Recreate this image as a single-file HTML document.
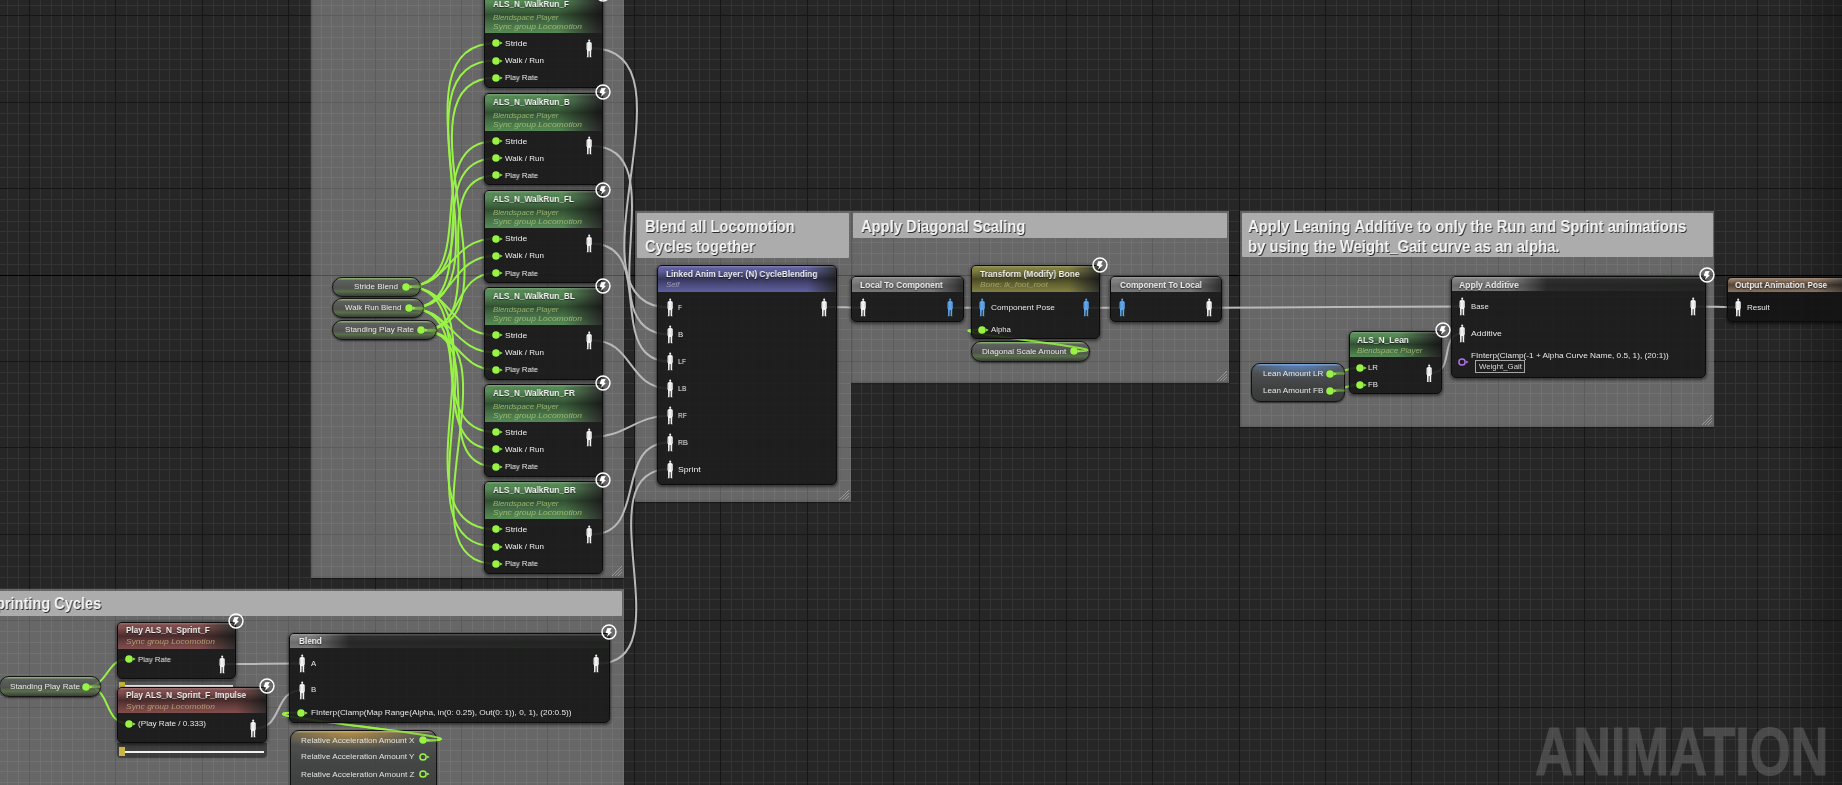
<!DOCTYPE html><html><head><meta charset="utf-8"><style>
*{margin:0;padding:0}
html,body{width:1842px;height:785px;overflow:hidden;background:#262626}
body{position:relative;font-family:"Liberation Sans",sans-serif}
.abs{position:absolute}
.t{position:absolute;white-space:nowrap;line-height:1.15;transform-origin:0 0;z-index:4;-webkit-font-smoothing:antialiased;will-change:transform}
.cm{position:absolute;background:rgba(255,255,255,0.3);box-shadow:inset 1px -1px 2px rgba(0,0,0,0.18),0 1px 1px rgba(0,0,0,0.35);z-index:1}
.ch{position:absolute;background:#acacac;border-radius:1px;z-index:1}
.nd{position:absolute;background:rgba(18,19,17,0.86);border:1px solid #0c0c0c;box-sizing:border-box;border-radius:5px;overflow:hidden;box-shadow:0 1px 3px 1px rgba(0,0,0,0.5);z-index:3}
.hd{position:absolute;left:0;top:0;right:0}
.vn{position:absolute;border-radius:10px;border:1px solid #161616;box-sizing:border-box;background:linear-gradient(180deg,rgba(160,220,120,0.75) 0,rgba(160,220,120,0) 2.5px),linear-gradient(180deg,rgba(98,100,98,0.8) 0%,rgba(72,76,70,0.78) 55%,rgba(86,112,70,0.85) 75%,rgba(52,56,50,0.9) 100%);box-shadow:0 1px 2px rgba(0,0,0,0.6);z-index:3}
.sn{position:absolute;border-radius:9px;border:1px solid #111;box-sizing:border-box;box-shadow:0 1px 2px rgba(0,0,0,0.6);z-index:3}
svg.abs{z-index:4}
</style></head><body><svg width="1842" height="785" style="position:absolute;left:0;top:0;z-index:0"><rect width="1842" height="785" fill="#262626"/><rect x="7" y="0" width="1" height="785" fill="#343434"/><rect x="18" y="0" width="1" height="785" fill="#343434"/><rect x="40" y="0" width="1" height="785" fill="#343434"/><rect x="51" y="0" width="1" height="785" fill="#343434"/><rect x="61" y="0" width="1" height="785" fill="#343434"/><rect x="72" y="0" width="1" height="785" fill="#343434"/><rect x="83" y="0" width="1" height="785" fill="#343434"/><rect x="94" y="0" width="1" height="785" fill="#343434"/><rect x="105" y="0" width="1" height="785" fill="#343434"/><rect x="126" y="0" width="1" height="785" fill="#343434"/><rect x="137" y="0" width="1" height="785" fill="#343434"/><rect x="148" y="0" width="1" height="785" fill="#343434"/><rect x="159" y="0" width="1" height="785" fill="#343434"/><rect x="169" y="0" width="1" height="785" fill="#343434"/><rect x="180" y="0" width="1" height="785" fill="#343434"/><rect x="191" y="0" width="1" height="785" fill="#343434"/><rect x="213" y="0" width="1" height="785" fill="#343434"/><rect x="223" y="0" width="1" height="785" fill="#343434"/><rect x="234" y="0" width="1" height="785" fill="#343434"/><rect x="245" y="0" width="1" height="785" fill="#343434"/><rect x="256" y="0" width="1" height="785" fill="#343434"/><rect x="267" y="0" width="1" height="785" fill="#343434"/><rect x="277" y="0" width="1" height="785" fill="#343434"/><rect x="299" y="0" width="1" height="785" fill="#343434"/><rect x="310" y="0" width="1" height="785" fill="#343434"/><rect x="321" y="0" width="1" height="785" fill="#343434"/><rect x="331" y="0" width="1" height="785" fill="#343434"/><rect x="342" y="0" width="1" height="785" fill="#343434"/><rect x="353" y="0" width="1" height="785" fill="#343434"/><rect x="364" y="0" width="1" height="785" fill="#343434"/><rect x="385" y="0" width="1" height="785" fill="#343434"/><rect x="396" y="0" width="1" height="785" fill="#343434"/><rect x="407" y="0" width="1" height="785" fill="#343434"/><rect x="418" y="0" width="1" height="785" fill="#343434"/><rect x="429" y="0" width="1" height="785" fill="#343434"/><rect x="439" y="0" width="1" height="785" fill="#343434"/><rect x="450" y="0" width="1" height="785" fill="#343434"/><rect x="472" y="0" width="1" height="785" fill="#343434"/><rect x="483" y="0" width="1" height="785" fill="#343434"/><rect x="493" y="0" width="1" height="785" fill="#343434"/><rect x="504" y="0" width="1" height="785" fill="#343434"/><rect x="515" y="0" width="1" height="785" fill="#343434"/><rect x="526" y="0" width="1" height="785" fill="#343434"/><rect x="537" y="0" width="1" height="785" fill="#343434"/><rect x="558" y="0" width="1" height="785" fill="#343434"/><rect x="569" y="0" width="1" height="785" fill="#343434"/><rect x="580" y="0" width="1" height="785" fill="#343434"/><rect x="591" y="0" width="1" height="785" fill="#343434"/><rect x="601" y="0" width="1" height="785" fill="#343434"/><rect x="612" y="0" width="1" height="785" fill="#343434"/><rect x="623" y="0" width="1" height="785" fill="#343434"/><rect x="645" y="0" width="1" height="785" fill="#343434"/><rect x="655" y="0" width="1" height="785" fill="#343434"/><rect x="666" y="0" width="1" height="785" fill="#343434"/><rect x="677" y="0" width="1" height="785" fill="#343434"/><rect x="688" y="0" width="1" height="785" fill="#343434"/><rect x="699" y="0" width="1" height="785" fill="#343434"/><rect x="709" y="0" width="1" height="785" fill="#343434"/><rect x="731" y="0" width="1" height="785" fill="#343434"/><rect x="742" y="0" width="1" height="785" fill="#343434"/><rect x="753" y="0" width="1" height="785" fill="#343434"/><rect x="763" y="0" width="1" height="785" fill="#343434"/><rect x="774" y="0" width="1" height="785" fill="#343434"/><rect x="785" y="0" width="1" height="785" fill="#343434"/><rect x="796" y="0" width="1" height="785" fill="#343434"/><rect x="817" y="0" width="1" height="785" fill="#343434"/><rect x="828" y="0" width="1" height="785" fill="#343434"/><rect x="839" y="0" width="1" height="785" fill="#343434"/><rect x="850" y="0" width="1" height="785" fill="#343434"/><rect x="861" y="0" width="1" height="785" fill="#343434"/><rect x="871" y="0" width="1" height="785" fill="#343434"/><rect x="882" y="0" width="1" height="785" fill="#343434"/><rect x="904" y="0" width="1" height="785" fill="#343434"/><rect x="915" y="0" width="1" height="785" fill="#343434"/><rect x="925" y="0" width="1" height="785" fill="#343434"/><rect x="936" y="0" width="1" height="785" fill="#343434"/><rect x="947" y="0" width="1" height="785" fill="#343434"/><rect x="958" y="0" width="1" height="785" fill="#343434"/><rect x="969" y="0" width="1" height="785" fill="#343434"/><rect x="990" y="0" width="1" height="785" fill="#343434"/><rect x="1001" y="0" width="1" height="785" fill="#343434"/><rect x="1012" y="0" width="1" height="785" fill="#343434"/><rect x="1023" y="0" width="1" height="785" fill="#343434"/><rect x="1033" y="0" width="1" height="785" fill="#343434"/><rect x="1044" y="0" width="1" height="785" fill="#343434"/><rect x="1055" y="0" width="1" height="785" fill="#343434"/><rect x="1077" y="0" width="1" height="785" fill="#343434"/><rect x="1087" y="0" width="1" height="785" fill="#343434"/><rect x="1098" y="0" width="1" height="785" fill="#343434"/><rect x="1109" y="0" width="1" height="785" fill="#343434"/><rect x="1120" y="0" width="1" height="785" fill="#343434"/><rect x="1131" y="0" width="1" height="785" fill="#343434"/><rect x="1141" y="0" width="1" height="785" fill="#343434"/><rect x="1163" y="0" width="1" height="785" fill="#343434"/><rect x="1174" y="0" width="1" height="785" fill="#343434"/><rect x="1185" y="0" width="1" height="785" fill="#343434"/><rect x="1195" y="0" width="1" height="785" fill="#343434"/><rect x="1206" y="0" width="1" height="785" fill="#343434"/><rect x="1217" y="0" width="1" height="785" fill="#343434"/><rect x="1228" y="0" width="1" height="785" fill="#343434"/><rect x="1249" y="0" width="1" height="785" fill="#343434"/><rect x="1260" y="0" width="1" height="785" fill="#343434"/><rect x="1271" y="0" width="1" height="785" fill="#343434"/><rect x="1282" y="0" width="1" height="785" fill="#343434"/><rect x="1293" y="0" width="1" height="785" fill="#343434"/><rect x="1303" y="0" width="1" height="785" fill="#343434"/><rect x="1314" y="0" width="1" height="785" fill="#343434"/><rect x="1336" y="0" width="1" height="785" fill="#343434"/><rect x="1347" y="0" width="1" height="785" fill="#343434"/><rect x="1357" y="0" width="1" height="785" fill="#343434"/><rect x="1368" y="0" width="1" height="785" fill="#343434"/><rect x="1379" y="0" width="1" height="785" fill="#343434"/><rect x="1390" y="0" width="1" height="785" fill="#343434"/><rect x="1401" y="0" width="1" height="785" fill="#343434"/><rect x="1422" y="0" width="1" height="785" fill="#343434"/><rect x="1433" y="0" width="1" height="785" fill="#343434"/><rect x="1444" y="0" width="1" height="785" fill="#343434"/><rect x="1455" y="0" width="1" height="785" fill="#343434"/><rect x="1465" y="0" width="1" height="785" fill="#343434"/><rect x="1476" y="0" width="1" height="785" fill="#343434"/><rect x="1487" y="0" width="1" height="785" fill="#343434"/><rect x="1509" y="0" width="1" height="785" fill="#343434"/><rect x="1519" y="0" width="1" height="785" fill="#343434"/><rect x="1530" y="0" width="1" height="785" fill="#343434"/><rect x="1541" y="0" width="1" height="785" fill="#343434"/><rect x="1552" y="0" width="1" height="785" fill="#343434"/><rect x="1563" y="0" width="1" height="785" fill="#343434"/><rect x="1573" y="0" width="1" height="785" fill="#343434"/><rect x="1595" y="0" width="1" height="785" fill="#343434"/><rect x="1606" y="0" width="1" height="785" fill="#343434"/><rect x="1617" y="0" width="1" height="785" fill="#343434"/><rect x="1627" y="0" width="1" height="785" fill="#343434"/><rect x="1638" y="0" width="1" height="785" fill="#343434"/><rect x="1649" y="0" width="1" height="785" fill="#343434"/><rect x="1660" y="0" width="1" height="785" fill="#343434"/><rect x="1681" y="0" width="1" height="785" fill="#343434"/><rect x="1692" y="0" width="1" height="785" fill="#343434"/><rect x="1703" y="0" width="1" height="785" fill="#343434"/><rect x="1714" y="0" width="1" height="785" fill="#343434"/><rect x="1725" y="0" width="1" height="785" fill="#343434"/><rect x="1735" y="0" width="1" height="785" fill="#343434"/><rect x="1746" y="0" width="1" height="785" fill="#343434"/><rect x="1768" y="0" width="1" height="785" fill="#343434"/><rect x="1779" y="0" width="1" height="785" fill="#343434"/><rect x="1789" y="0" width="1" height="785" fill="#343434"/><rect x="1800" y="0" width="1" height="785" fill="#343434"/><rect x="1811" y="0" width="1" height="785" fill="#343434"/><rect x="1822" y="0" width="1" height="785" fill="#343434"/><rect x="1833" y="0" width="1" height="785" fill="#343434"/><rect x="0" y="5" width="1842" height="1" fill="#343434"/><rect x="0" y="26" width="1842" height="1" fill="#343434"/><rect x="0" y="37" width="1842" height="1" fill="#343434"/><rect x="0" y="48" width="1842" height="1" fill="#343434"/><rect x="0" y="59" width="1842" height="1" fill="#343434"/><rect x="0" y="69" width="1842" height="1" fill="#343434"/><rect x="0" y="80" width="1842" height="1" fill="#343434"/><rect x="0" y="91" width="1842" height="1" fill="#343434"/><rect x="0" y="113" width="1842" height="1" fill="#343434"/><rect x="0" y="123" width="1842" height="1" fill="#343434"/><rect x="0" y="134" width="1842" height="1" fill="#343434"/><rect x="0" y="145" width="1842" height="1" fill="#343434"/><rect x="0" y="156" width="1842" height="1" fill="#343434"/><rect x="0" y="167" width="1842" height="1" fill="#343434"/><rect x="0" y="177" width="1842" height="1" fill="#343434"/><rect x="0" y="199" width="1842" height="1" fill="#343434"/><rect x="0" y="210" width="1842" height="1" fill="#343434"/><rect x="0" y="221" width="1842" height="1" fill="#343434"/><rect x="0" y="231" width="1842" height="1" fill="#343434"/><rect x="0" y="242" width="1842" height="1" fill="#343434"/><rect x="0" y="253" width="1842" height="1" fill="#343434"/><rect x="0" y="264" width="1842" height="1" fill="#343434"/><rect x="0" y="285" width="1842" height="1" fill="#343434"/><rect x="0" y="296" width="1842" height="1" fill="#343434"/><rect x="0" y="307" width="1842" height="1" fill="#343434"/><rect x="0" y="318" width="1842" height="1" fill="#343434"/><rect x="0" y="329" width="1842" height="1" fill="#343434"/><rect x="0" y="339" width="1842" height="1" fill="#343434"/><rect x="0" y="350" width="1842" height="1" fill="#343434"/><rect x="0" y="372" width="1842" height="1" fill="#343434"/><rect x="0" y="383" width="1842" height="1" fill="#343434"/><rect x="0" y="393" width="1842" height="1" fill="#343434"/><rect x="0" y="404" width="1842" height="1" fill="#343434"/><rect x="0" y="415" width="1842" height="1" fill="#343434"/><rect x="0" y="426" width="1842" height="1" fill="#343434"/><rect x="0" y="437" width="1842" height="1" fill="#343434"/><rect x="0" y="458" width="1842" height="1" fill="#343434"/><rect x="0" y="469" width="1842" height="1" fill="#343434"/><rect x="0" y="480" width="1842" height="1" fill="#343434"/><rect x="0" y="491" width="1842" height="1" fill="#343434"/><rect x="0" y="501" width="1842" height="1" fill="#343434"/><rect x="0" y="512" width="1842" height="1" fill="#343434"/><rect x="0" y="523" width="1842" height="1" fill="#343434"/><rect x="0" y="545" width="1842" height="1" fill="#343434"/><rect x="0" y="555" width="1842" height="1" fill="#343434"/><rect x="0" y="566" width="1842" height="1" fill="#343434"/><rect x="0" y="577" width="1842" height="1" fill="#343434"/><rect x="0" y="588" width="1842" height="1" fill="#343434"/><rect x="0" y="599" width="1842" height="1" fill="#343434"/><rect x="0" y="609" width="1842" height="1" fill="#343434"/><rect x="0" y="631" width="1842" height="1" fill="#343434"/><rect x="0" y="642" width="1842" height="1" fill="#343434"/><rect x="0" y="653" width="1842" height="1" fill="#343434"/><rect x="0" y="663" width="1842" height="1" fill="#343434"/><rect x="0" y="674" width="1842" height="1" fill="#343434"/><rect x="0" y="685" width="1842" height="1" fill="#343434"/><rect x="0" y="696" width="1842" height="1" fill="#343434"/><rect x="0" y="717" width="1842" height="1" fill="#343434"/><rect x="0" y="728" width="1842" height="1" fill="#343434"/><rect x="0" y="739" width="1842" height="1" fill="#343434"/><rect x="0" y="750" width="1842" height="1" fill="#343434"/><rect x="0" y="761" width="1842" height="1" fill="#343434"/><rect x="0" y="771" width="1842" height="1" fill="#343434"/><rect x="0" y="782" width="1842" height="1" fill="#343434"/><rect x="29" y="0" width="1" height="785" fill="#161616"/><rect x="115" y="0" width="1" height="785" fill="#161616"/><rect x="202" y="0" width="1" height="785" fill="#161616"/><rect x="288" y="0" width="1" height="785" fill="#161616"/><rect x="375" y="0" width="1" height="785" fill="#161616"/><rect x="461" y="0" width="1" height="785" fill="#161616"/><rect x="547" y="0" width="1" height="785" fill="#161616"/><rect x="634" y="0" width="1" height="785" fill="#161616"/><rect x="720" y="0" width="1" height="785" fill="#161616"/><rect x="807" y="0" width="1" height="785" fill="#161616"/><rect x="893" y="0" width="1" height="785" fill="#161616"/><rect x="979" y="0" width="1" height="785" fill="#161616"/><rect x="1066" y="0" width="1" height="785" fill="#161616"/><rect x="1152" y="0" width="1" height="785" fill="#161616"/><rect x="1239" y="0" width="1" height="785" fill="#161616"/><rect x="1325" y="0" width="1" height="785" fill="#161616"/><rect x="1411" y="0" width="1" height="785" fill="#161616"/><rect x="1498" y="0" width="1" height="785" fill="#161616"/><rect x="1584" y="0" width="1" height="785" fill="#161616"/><rect x="1671" y="0" width="1" height="785" fill="#161616"/><rect x="1757" y="0" width="1" height="785" fill="#161616"/><rect x="0" y="15" width="1842" height="1" fill="#161616"/><rect x="0" y="102" width="1842" height="1" fill="#161616"/><rect x="0" y="188" width="1842" height="1" fill="#161616"/><rect x="0" y="275" width="1842" height="1" fill="#000"/><rect x="0" y="361" width="1842" height="1" fill="#161616"/><rect x="0" y="447" width="1842" height="1" fill="#161616"/><rect x="0" y="534" width="1842" height="1" fill="#161616"/><rect x="0" y="620" width="1842" height="1" fill="#161616"/><rect x="0" y="707" width="1842" height="1" fill="#161616"/><defs><linearGradient id="vig" x1="0" x2="1"><stop offset="0" stop-color="#000" stop-opacity="0"/><stop offset="1" stop-color="#000" stop-opacity="0.24"/></linearGradient></defs><rect x="1782" y="0" width="60" height="785" fill="url(#vig)"/></svg>
<div class="cm" style="left:311px;top:-20px;width:313px;height:598px"></div>
<svg class="abs" width="12" height="12" style="left:611px;top:565px"><path d="M11,4 L4,11 M11,7 L7,11 M11,1 L1,11" stroke="rgba(255,255,255,0.35)" stroke-width="0.9"/></svg>
<div class="cm" style="left:-20px;top:589px;width:644px;height:211px"></div>
<div class="ch" style="left:-20px;top:591px;width:642px;height:24.5px"></div>
<div class="t" style="left:-4.00px;top:594.40px;font-size:16.8px;color:#f4f4f4;font-weight:bold;text-shadow:1px 1px 0 rgba(0,0,0,0.75);transform:scaleX(0.8677);">printing Cycles</div>
<svg class="abs" width="12" height="12" style="left:611px;top:787px"><path d="M11,4 L4,11 M11,7 L7,11 M11,1 L1,11" stroke="rgba(255,255,255,0.35)" stroke-width="0.9"/></svg>
<div class="cm" style="left:635px;top:211px;width:216px;height:291px"></div>
<div class="ch" style="left:637px;top:213px;width:212px;height:45px"></div>
<div class="t" style="left:645.00px;top:216.90px;font-size:16.8px;color:#f4f4f4;font-weight:bold;text-shadow:1px 1px 0 rgba(0,0,0,0.75);transform:scaleX(0.8782);">Blend all Locomotion</div>
<div class="t" style="left:645.00px;top:237.00px;font-size:16.8px;color:#f4f4f4;font-weight:bold;text-shadow:1px 1px 0 rgba(0,0,0,0.75);transform:scaleX(0.8727);">Cycles together</div>
<svg class="abs" width="12" height="12" style="left:838px;top:489px"><path d="M11,4 L4,11 M11,7 L7,11 M11,1 L1,11" stroke="rgba(255,255,255,0.35)" stroke-width="0.9"/></svg>
<div class="cm" style="left:851px;top:211px;width:378px;height:172px"></div>
<div class="ch" style="left:853px;top:213px;width:374px;height:25px"></div>
<div class="t" style="left:860.60px;top:217.30px;font-size:16.8px;color:#f4f4f4;font-weight:bold;text-shadow:1px 1px 0 rgba(0,0,0,0.75);transform:scaleX(0.8816);">Apply Diagonal Scaling</div>
<svg class="abs" width="12" height="12" style="left:1216px;top:370px"><path d="M11,4 L4,11 M11,7 L7,11 M11,1 L1,11" stroke="rgba(255,255,255,0.35)" stroke-width="0.9"/></svg>
<div class="cm" style="left:1240px;top:211px;width:474px;height:216px"></div>
<div class="ch" style="left:1242px;top:213px;width:471px;height:44px"></div>
<div class="t" style="left:1248.20px;top:217.10px;font-size:16.8px;color:#f4f4f4;font-weight:bold;text-shadow:1px 1px 0 rgba(0,0,0,0.75);transform:scaleX(0.8881);">Apply Leaning Additive to only the Run and Sprint animations</div>
<div class="t" style="left:1248.20px;top:237.40px;font-size:16.8px;color:#f4f4f4;font-weight:bold;text-shadow:1px 1px 0 rgba(0,0,0,0.75);transform:scaleX(0.8872);">by using the Weight_Gait curve as an alpha.</div>
<svg class="abs" width="12" height="12" style="left:1701px;top:414px"><path d="M11,4 L4,11 M11,7 L7,11 M11,1 L1,11" stroke="rgba(255,255,255,0.35)" stroke-width="0.9"/></svg>
<svg class="abs" width="1842" height="785" style="left:0;top:0;z-index:2"><path d="M405.60,286.60 C516.70,286.60 384.50,43.30 495.60,43.30" stroke="#99f246" stroke-width="2.0" fill="none"/><path d="M408.60,308.30 C520.20,308.30 384.00,60.50 495.60,60.50" stroke="#99f246" stroke-width="2.0" fill="none"/><path d="M420.90,330.40 C530.03,330.40 386.47,77.70 495.60,77.70" stroke="#99f246" stroke-width="2.0" fill="none"/><path d="M591.80,48.20 C704.13,48.20 557.17,307.50 669.50,307.50" stroke="#b9b9b9" stroke-width="2.0" fill="none"/><path d="M405.60,286.60 C484.13,286.60 417.07,141.00 495.60,141.00" stroke="#99f246" stroke-width="2.0" fill="none"/><path d="M408.60,308.30 C487.63,308.30 416.57,158.20 495.60,158.20" stroke="#99f246" stroke-width="2.0" fill="none"/><path d="M420.90,330.40 C497.47,330.40 419.03,175.40 495.60,175.40" stroke="#99f246" stroke-width="2.0" fill="none"/><path d="M591.80,145.90 C680.57,145.90 580.73,334.50 669.50,334.50" stroke="#b9b9b9" stroke-width="2.0" fill="none"/><path d="M405.60,286.60 C451.63,286.60 449.57,238.50 495.60,238.50" stroke="#99f246" stroke-width="2.0" fill="none"/><path d="M408.60,308.30 C455.13,308.30 449.07,255.70 495.60,255.70" stroke="#99f246" stroke-width="2.0" fill="none"/><path d="M420.90,330.40 C464.97,330.40 451.53,272.90 495.60,272.90" stroke="#99f246" stroke-width="2.0" fill="none"/><path d="M591.80,243.40 C657.07,243.40 604.23,361.50 669.50,361.50" stroke="#b9b9b9" stroke-width="2.0" fill="none"/><path d="M405.60,286.60 C451.83,286.60 449.37,335.30 495.60,335.30" stroke="#99f246" stroke-width="2.0" fill="none"/><path d="M408.60,308.30 C452.33,308.30 451.87,352.50 495.60,352.50" stroke="#99f246" stroke-width="2.0" fill="none"/><path d="M420.90,330.40 C458.90,330.40 457.60,369.70 495.60,369.70" stroke="#99f246" stroke-width="2.0" fill="none"/><path d="M591.80,340.20 C633.80,340.20 627.50,388.50 669.50,388.50" stroke="#b9b9b9" stroke-width="2.0" fill="none"/><path d="M405.60,286.60 C484.13,286.60 417.07,432.20 495.60,432.20" stroke="#99f246" stroke-width="2.0" fill="none"/><path d="M408.60,308.30 C484.63,308.30 419.57,449.40 495.60,449.40" stroke="#99f246" stroke-width="2.0" fill="none"/><path d="M420.90,330.40 C491.20,330.40 425.30,466.60 495.60,466.60" stroke="#99f246" stroke-width="2.0" fill="none"/><path d="M591.80,437.10 C624.90,437.10 636.40,415.50 669.50,415.50" stroke="#b9b9b9" stroke-width="2.0" fill="none"/><path d="M405.60,286.60 C516.53,286.60 384.67,529.40 495.60,529.40" stroke="#99f246" stroke-width="2.0" fill="none"/><path d="M408.60,308.30 C517.03,308.30 387.17,546.60 495.60,546.60" stroke="#99f246" stroke-width="2.0" fill="none"/><path d="M420.90,330.40 C523.60,330.40 392.90,563.80 495.60,563.80" stroke="#99f246" stroke-width="2.0" fill="none"/><path d="M591.80,534.30 C648.30,534.30 613.00,442.50 669.50,442.50" stroke="#b9b9b9" stroke-width="2.0" fill="none"/><path d="M597.90,663.60 C686.63,663.60 580.77,469.00 669.50,469.00" stroke="#b9b9b9" stroke-width="2.0" fill="none"/><path d="M826.70,307.00 C839.20,307.00 851.00,307.70 863.50,307.70" stroke="#b9b9b9" stroke-width="2.0" fill="none"/><path d="M951.80,307.70 C961.97,307.70 972.13,307.70 982.30,307.70" stroke="#b9b9b9" stroke-width="2.0" fill="none"/><path d="M1088.60,307.70 C1099.90,307.70 1111.20,307.70 1122.50,307.70" stroke="#b9b9b9" stroke-width="2.0" fill="none"/><path d="M1211.80,307.70 C1295.83,307.70 1378.57,306.40 1462.60,306.40" stroke="#b9b9b9" stroke-width="2.0" fill="none"/><path d="M1431.50,373.00 C1455.10,373.00 1439.00,333.30 1462.60,333.30" stroke="#b9b9b9" stroke-width="2.0" fill="none"/><path d="M1695.60,306.40 C1710.10,306.40 1723.80,307.20 1738.30,307.20" stroke="#b9b9b9" stroke-width="2.0" fill="none"/><path d="M224.20,664.10 C250.20,664.10 275.70,663.60 301.70,663.60" stroke="#b9b9b9" stroke-width="2.0" fill="none"/><path d="M255.10,728.40 C283.37,728.40 273.43,690.20 301.70,690.20" stroke="#b9b9b9" stroke-width="2.0" fill="none"/><path d="M85.70,686.60 C109.30,686.60 105.20,658.90 128.80,658.90" stroke="#99f246" stroke-width="2.0" fill="none"/><path d="M85.70,686.60 C112.43,686.60 102.07,723.70 128.80,723.70" stroke="#99f246" stroke-width="2.0" fill="none"/><path d="M422.60,740.40 C517.43,740.40 206.37,712.60 301.20,712.60" stroke="#99f246" stroke-width="2.0" fill="none"/><path d="M1073.60,351.30 C1145.37,351.30 910.53,329.50 982.30,329.50" stroke="#99f246" stroke-width="2.0" fill="none"/><path d="M1329.60,373.50 C1341.53,373.50 1347.57,367.60 1359.50,367.60" stroke="#99f246" stroke-width="2.0" fill="none"/><path d="M1329.60,390.50 C1341.53,390.50 1347.57,384.60 1359.50,384.60" stroke="#99f246" stroke-width="2.0" fill="none"/></svg>
<svg class="abs" width="1842" height="785" style="left:0;top:0;z-index:4;pointer-events:none;opacity:0.8"><defs><clipPath id="cl1"><rect x="0" y="339.5" width="1842" height="785"/><rect x="0" y="0" width="970.5" height="785"/></clipPath><clipPath id="cl2"><rect x="0" y="723.5" width="1842" height="785"/><rect x="0" y="0" width="289" height="785"/></clipPath></defs><g clip-path="url(#cl2)"><path d="M422.60,740.40 C517.43,740.40 206.37,712.60 301.20,712.60" stroke="#99f246" stroke-width="2.0" fill="none"/></g><g clip-path="url(#cl1)"><path d="M1073.60,351.30 C1145.37,351.30 910.53,329.50 982.30,329.50" stroke="#99f246" stroke-width="2.0" fill="none"/></g><path d="M408.60,285.00 L421.50,285.50 L421.50,287.70 L408.60,288.20 Z" fill="#99f246" opacity="0.55"/><path d="M411.60,306.70 L424.50,307.20 L424.50,309.40 L411.60,309.90 Z" fill="#99f246" opacity="0.55"/><path d="M423.90,328.80 L436.70,329.30 L436.70,331.50 L423.90,332.00 Z" fill="#99f246" opacity="0.55"/><path d="M88.70,685.00 L100.60,685.50 L100.60,687.70 L88.70,688.20 Z" fill="#99f246" opacity="0.55"/><path d="M425.60,738.80 L437.40,739.30 L437.40,741.50 L425.60,742.00 Z" fill="#99f246" opacity="0.55"/><path d="M1332.60,371.90 L1344.90,372.40 L1344.90,374.60 L1332.60,375.10 Z" fill="#99f246" opacity="0.55"/><path d="M1332.60,388.90 L1344.90,389.40 L1344.90,391.60 L1332.60,392.10 Z" fill="#99f246" opacity="0.55"/></svg>
<div class="nd" style="left:484.2px;top:-4.800000000000004px;width:118.40px;height:92.60px"><div class="hd" style="height:36.90px;background:linear-gradient(180deg,rgba(255,255,255,0.2) 0,rgba(255,255,255,0.0) 2.5px,rgba(0,0,0,0.0) 18%,rgba(0,0,0,0.42) 50%,rgba(0,0,0,0.22) 72%,rgba(0,0,0,0) 100%),linear-gradient(90deg,rgb(86,138,86) 0px,rgb(86,138,86) 72.9px,rgb(44,46,44) 111.9px,rgb(38,40,38) 100%)"></div></div>
<div class="t" style="left:493.00px;top:-0.81px;font-size:9.4px;color:#f2f2f2;font-weight:bold;text-shadow:0 1px 1px rgba(0,0,0,0.55),0 0 4px rgba(0,0,0,0.35);transform:scaleX(0.8754);z-index:4;">ALS_N_WalkRun_F</div>
<div class="t" style="left:493.00px;top:14.18px;font-size:7.2px;color:rgba(180,205,130,0.75);font-style:italic;transform:scaleX(1.0926);z-index:4;">Blendspace Player</div>
<div class="t" style="left:493.00px;top:23.08px;font-size:7.2px;color:rgba(180,205,130,0.75);font-style:italic;transform:scaleX(1.1791);z-index:4;">Sync group Locomotion</div>
<svg class="abs" width="16" height="12" style="left:489.60px;top:37.30px"><circle cx="6" cy="6" r="3.8" fill="#99f246" stroke="rgba(0,0,0,0.35)" stroke-width="0.6" paint-order="stroke"/><path d="M10.1,4.4 L12.6,6 L10.1,7.6 Z" fill="#99f246"/></svg>
<div class="t" style="left:505.10px;top:38.96px;font-size:8px;color:#ececec;transform:scaleX(1.0622);z-index:4;">Stride</div>
<svg class="abs" width="16" height="12" style="left:489.60px;top:54.50px"><circle cx="6" cy="6" r="3.8" fill="#99f246" stroke="rgba(0,0,0,0.35)" stroke-width="0.6" paint-order="stroke"/><path d="M10.1,4.4 L12.6,6 L10.1,7.6 Z" fill="#99f246"/></svg>
<div class="t" style="left:505.10px;top:56.16px;font-size:8px;color:#ececec;z-index:4;">Walk / Run</div>
<svg class="abs" width="16" height="12" style="left:489.60px;top:71.70px"><circle cx="6" cy="6" r="3.8" fill="#99f246" stroke="rgba(0,0,0,0.35)" stroke-width="0.6" paint-order="stroke"/><path d="M10.1,4.4 L12.6,6 L10.1,7.6 Z" fill="#99f246"/></svg>
<div class="t" style="left:505.10px;top:73.36px;font-size:8px;color:#ececec;transform:scaleX(0.9514);z-index:4;">Play Rate</div>
<svg class="abs" width="6.30" height="18.89" viewBox="-1 -1 14 38" preserveAspectRatio="none" style="left:586.45px;top:38.75px"><g fill="#f2f2f2" stroke="rgba(0,0,0,0.4)" stroke-width="0.7" paint-order="stroke"><ellipse cx="6.1" cy="2.4" rx="2.3" ry="2.4"/><path d="M4.4,4.8 L7.8,4.8 L11,6 L11.8,8.2 L12,19.5 L10.8,20.9 L10.4,33.6 L11.5,35.9 L7.1,35.9 L6.9,23 L5.1,23 L4.7,35.9 L0.4,35.9 L1.5,33.6 L1.2,20.9 L0,19.5 L0.2,8.2 L1,6 Z"/></g><path d="M2.6,9.5 L2.4,19 M9.5,9.5 L9.7,19" stroke="rgba(0,0,0,0.35)" stroke-width="0.6"/></svg>
<svg class="abs" width="18" height="18" viewBox="-9 -9 18 18" style="left:594.40px;top:-14.70px;z-index:5"><circle cx="0" cy="0" r="6.95" fill="none" stroke="#fff" stroke-width="1.5"/><path d="M-1.8,-3.7 L2.8,-4 L1.0,-0.7 L2.8,0.2 L-2.2,4.9 L-0.8,1.3 L-3.3,0.8 Z" fill="#fff"/></svg>
<div class="nd" style="left:484.2px;top:92.9px;width:118.40px;height:92.60px"><div class="hd" style="height:36.90px;background:linear-gradient(180deg,rgba(255,255,255,0.2) 0,rgba(255,255,255,0.0) 2.5px,rgba(0,0,0,0.0) 18%,rgba(0,0,0,0.42) 50%,rgba(0,0,0,0.22) 72%,rgba(0,0,0,0) 100%),linear-gradient(90deg,rgb(86,138,86) 0px,rgb(86,138,86) 73.8px,rgb(44,46,44) 112.8px,rgb(38,40,38) 100%)"></div></div>
<div class="t" style="left:493.00px;top:96.89px;font-size:9.4px;color:#f2f2f2;font-weight:bold;text-shadow:0 1px 1px rgba(0,0,0,0.55),0 0 4px rgba(0,0,0,0.35);transform:scaleX(0.8754);z-index:4;">ALS_N_WalkRun_B</div>
<div class="t" style="left:493.00px;top:111.88px;font-size:7.2px;color:rgba(180,205,130,0.75);font-style:italic;transform:scaleX(1.0926);z-index:4;">Blendspace Player</div>
<div class="t" style="left:493.00px;top:120.78px;font-size:7.2px;color:rgba(180,205,130,0.75);font-style:italic;transform:scaleX(1.1791);z-index:4;">Sync group Locomotion</div>
<svg class="abs" width="16" height="12" style="left:489.60px;top:135.00px"><circle cx="6" cy="6" r="3.8" fill="#99f246" stroke="rgba(0,0,0,0.35)" stroke-width="0.6" paint-order="stroke"/><path d="M10.1,4.4 L12.6,6 L10.1,7.6 Z" fill="#99f246"/></svg>
<div class="t" style="left:505.10px;top:136.66px;font-size:8px;color:#ececec;transform:scaleX(1.0622);z-index:4;">Stride</div>
<svg class="abs" width="16" height="12" style="left:489.60px;top:152.20px"><circle cx="6" cy="6" r="3.8" fill="#99f246" stroke="rgba(0,0,0,0.35)" stroke-width="0.6" paint-order="stroke"/><path d="M10.1,4.4 L12.6,6 L10.1,7.6 Z" fill="#99f246"/></svg>
<div class="t" style="left:505.10px;top:153.86px;font-size:8px;color:#ececec;z-index:4;">Walk / Run</div>
<svg class="abs" width="16" height="12" style="left:489.60px;top:169.40px"><circle cx="6" cy="6" r="3.8" fill="#99f246" stroke="rgba(0,0,0,0.35)" stroke-width="0.6" paint-order="stroke"/><path d="M10.1,4.4 L12.6,6 L10.1,7.6 Z" fill="#99f246"/></svg>
<div class="t" style="left:505.10px;top:171.06px;font-size:8px;color:#ececec;transform:scaleX(0.9514);z-index:4;">Play Rate</div>
<svg class="abs" width="6.30" height="18.89" viewBox="-1 -1 14 38" preserveAspectRatio="none" style="left:586.45px;top:136.45px"><g fill="#f2f2f2" stroke="rgba(0,0,0,0.4)" stroke-width="0.7" paint-order="stroke"><ellipse cx="6.1" cy="2.4" rx="2.3" ry="2.4"/><path d="M4.4,4.8 L7.8,4.8 L11,6 L11.8,8.2 L12,19.5 L10.8,20.9 L10.4,33.6 L11.5,35.9 L7.1,35.9 L6.9,23 L5.1,23 L4.7,35.9 L0.4,35.9 L1.5,33.6 L1.2,20.9 L0,19.5 L0.2,8.2 L1,6 Z"/></g><path d="M2.6,9.5 L2.4,19 M9.5,9.5 L9.7,19" stroke="rgba(0,0,0,0.35)" stroke-width="0.6"/></svg>
<svg class="abs" width="18" height="18" viewBox="-9 -9 18 18" style="left:594.40px;top:83.00px;z-index:5"><circle cx="0" cy="0" r="6.95" fill="none" stroke="#fff" stroke-width="1.5"/><path d="M-1.8,-3.7 L2.8,-4 L1.0,-0.7 L2.8,0.2 L-2.2,4.9 L-0.8,1.3 L-3.3,0.8 Z" fill="#fff"/></svg>
<div class="nd" style="left:484.2px;top:190.4px;width:118.40px;height:92.60px"><div class="hd" style="height:36.90px;background:linear-gradient(180deg,rgba(255,255,255,0.2) 0,rgba(255,255,255,0.0) 2.5px,rgba(0,0,0,0.0) 18%,rgba(0,0,0,0.42) 50%,rgba(0,0,0,0.22) 72%,rgba(0,0,0,0) 100%),linear-gradient(90deg,rgb(86,138,86) 0px,rgb(86,138,86) 77.9px,rgb(44,46,44) 116.9px,rgb(38,40,38) 100%)"></div></div>
<div class="t" style="left:493.00px;top:194.39px;font-size:9.4px;color:#f2f2f2;font-weight:bold;text-shadow:0 1px 1px rgba(0,0,0,0.55),0 0 4px rgba(0,0,0,0.35);transform:scaleX(0.8754);z-index:4;">ALS_N_WalkRun_FL</div>
<div class="t" style="left:493.00px;top:209.38px;font-size:7.2px;color:rgba(180,205,130,0.75);font-style:italic;transform:scaleX(1.0926);z-index:4;">Blendspace Player</div>
<div class="t" style="left:493.00px;top:218.28px;font-size:7.2px;color:rgba(180,205,130,0.75);font-style:italic;transform:scaleX(1.1791);z-index:4;">Sync group Locomotion</div>
<svg class="abs" width="16" height="12" style="left:489.60px;top:232.50px"><circle cx="6" cy="6" r="3.8" fill="#99f246" stroke="rgba(0,0,0,0.35)" stroke-width="0.6" paint-order="stroke"/><path d="M10.1,4.4 L12.6,6 L10.1,7.6 Z" fill="#99f246"/></svg>
<div class="t" style="left:505.10px;top:234.16px;font-size:8px;color:#ececec;transform:scaleX(1.0622);z-index:4;">Stride</div>
<svg class="abs" width="16" height="12" style="left:489.60px;top:249.70px"><circle cx="6" cy="6" r="3.8" fill="#99f246" stroke="rgba(0,0,0,0.35)" stroke-width="0.6" paint-order="stroke"/><path d="M10.1,4.4 L12.6,6 L10.1,7.6 Z" fill="#99f246"/></svg>
<div class="t" style="left:505.10px;top:251.36px;font-size:8px;color:#ececec;z-index:4;">Walk / Run</div>
<svg class="abs" width="16" height="12" style="left:489.60px;top:266.90px"><circle cx="6" cy="6" r="3.8" fill="#99f246" stroke="rgba(0,0,0,0.35)" stroke-width="0.6" paint-order="stroke"/><path d="M10.1,4.4 L12.6,6 L10.1,7.6 Z" fill="#99f246"/></svg>
<div class="t" style="left:505.10px;top:268.56px;font-size:8px;color:#ececec;transform:scaleX(0.9514);z-index:4;">Play Rate</div>
<svg class="abs" width="6.30" height="18.89" viewBox="-1 -1 14 38" preserveAspectRatio="none" style="left:586.45px;top:233.95px"><g fill="#f2f2f2" stroke="rgba(0,0,0,0.4)" stroke-width="0.7" paint-order="stroke"><ellipse cx="6.1" cy="2.4" rx="2.3" ry="2.4"/><path d="M4.4,4.8 L7.8,4.8 L11,6 L11.8,8.2 L12,19.5 L10.8,20.9 L10.4,33.6 L11.5,35.9 L7.1,35.9 L6.9,23 L5.1,23 L4.7,35.9 L0.4,35.9 L1.5,33.6 L1.2,20.9 L0,19.5 L0.2,8.2 L1,6 Z"/></g><path d="M2.6,9.5 L2.4,19 M9.5,9.5 L9.7,19" stroke="rgba(0,0,0,0.35)" stroke-width="0.6"/></svg>
<svg class="abs" width="18" height="18" viewBox="-9 -9 18 18" style="left:594.40px;top:180.50px;z-index:5"><circle cx="0" cy="0" r="6.95" fill="none" stroke="#fff" stroke-width="1.5"/><path d="M-1.8,-3.7 L2.8,-4 L1.0,-0.7 L2.8,0.2 L-2.2,4.9 L-0.8,1.3 L-3.3,0.8 Z" fill="#fff"/></svg>
<div class="nd" style="left:484.2px;top:287.2px;width:118.40px;height:92.60px"><div class="hd" style="height:36.90px;background:linear-gradient(180deg,rgba(255,255,255,0.2) 0,rgba(255,255,255,0.0) 2.5px,rgba(0,0,0,0.0) 18%,rgba(0,0,0,0.42) 50%,rgba(0,0,0,0.22) 72%,rgba(0,0,0,0) 100%),linear-gradient(90deg,rgb(86,138,86) 0px,rgb(86,138,86) 78.8px,rgb(44,46,44) 117.8px,rgb(38,40,38) 100%)"></div></div>
<div class="t" style="left:493.00px;top:291.19px;font-size:9.4px;color:#f2f2f2;font-weight:bold;text-shadow:0 1px 1px rgba(0,0,0,0.55),0 0 4px rgba(0,0,0,0.35);transform:scaleX(0.8754);z-index:4;">ALS_N_WalkRun_BL</div>
<div class="t" style="left:493.00px;top:306.18px;font-size:7.2px;color:rgba(180,205,130,0.75);font-style:italic;transform:scaleX(1.0926);z-index:4;">Blendspace Player</div>
<div class="t" style="left:493.00px;top:315.08px;font-size:7.2px;color:rgba(180,205,130,0.75);font-style:italic;transform:scaleX(1.1791);z-index:4;">Sync group Locomotion</div>
<svg class="abs" width="16" height="12" style="left:489.60px;top:329.30px"><circle cx="6" cy="6" r="3.8" fill="#99f246" stroke="rgba(0,0,0,0.35)" stroke-width="0.6" paint-order="stroke"/><path d="M10.1,4.4 L12.6,6 L10.1,7.6 Z" fill="#99f246"/></svg>
<div class="t" style="left:505.10px;top:330.96px;font-size:8px;color:#ececec;transform:scaleX(1.0622);z-index:4;">Stride</div>
<svg class="abs" width="16" height="12" style="left:489.60px;top:346.50px"><circle cx="6" cy="6" r="3.8" fill="#99f246" stroke="rgba(0,0,0,0.35)" stroke-width="0.6" paint-order="stroke"/><path d="M10.1,4.4 L12.6,6 L10.1,7.6 Z" fill="#99f246"/></svg>
<div class="t" style="left:505.10px;top:348.16px;font-size:8px;color:#ececec;z-index:4;">Walk / Run</div>
<svg class="abs" width="16" height="12" style="left:489.60px;top:363.70px"><circle cx="6" cy="6" r="3.8" fill="#99f246" stroke="rgba(0,0,0,0.35)" stroke-width="0.6" paint-order="stroke"/><path d="M10.1,4.4 L12.6,6 L10.1,7.6 Z" fill="#99f246"/></svg>
<div class="t" style="left:505.10px;top:365.36px;font-size:8px;color:#ececec;transform:scaleX(0.9514);z-index:4;">Play Rate</div>
<svg class="abs" width="6.30" height="18.89" viewBox="-1 -1 14 38" preserveAspectRatio="none" style="left:586.45px;top:330.75px"><g fill="#f2f2f2" stroke="rgba(0,0,0,0.4)" stroke-width="0.7" paint-order="stroke"><ellipse cx="6.1" cy="2.4" rx="2.3" ry="2.4"/><path d="M4.4,4.8 L7.8,4.8 L11,6 L11.8,8.2 L12,19.5 L10.8,20.9 L10.4,33.6 L11.5,35.9 L7.1,35.9 L6.9,23 L5.1,23 L4.7,35.9 L0.4,35.9 L1.5,33.6 L1.2,20.9 L0,19.5 L0.2,8.2 L1,6 Z"/></g><path d="M2.6,9.5 L2.4,19 M9.5,9.5 L9.7,19" stroke="rgba(0,0,0,0.35)" stroke-width="0.6"/></svg>
<svg class="abs" width="18" height="18" viewBox="-9 -9 18 18" style="left:594.40px;top:277.30px;z-index:5"><circle cx="0" cy="0" r="6.95" fill="none" stroke="#fff" stroke-width="1.5"/><path d="M-1.8,-3.7 L2.8,-4 L1.0,-0.7 L2.8,0.2 L-2.2,4.9 L-0.8,1.3 L-3.3,0.8 Z" fill="#fff"/></svg>
<div class="nd" style="left:484.2px;top:384.09999999999997px;width:118.40px;height:92.60px"><div class="hd" style="height:36.90px;background:linear-gradient(180deg,rgba(255,255,255,0.2) 0,rgba(255,255,255,0.0) 2.5px,rgba(0,0,0,0.0) 18%,rgba(0,0,0,0.42) 50%,rgba(0,0,0,0.22) 72%,rgba(0,0,0,0) 100%),linear-gradient(90deg,rgb(86,138,86) 0px,rgb(86,138,86) 78.8px,rgb(44,46,44) 117.8px,rgb(38,40,38) 100%)"></div></div>
<div class="t" style="left:493.00px;top:388.09px;font-size:9.4px;color:#f2f2f2;font-weight:bold;text-shadow:0 1px 1px rgba(0,0,0,0.55),0 0 4px rgba(0,0,0,0.35);transform:scaleX(0.8754);z-index:4;">ALS_N_WalkRun_FR</div>
<div class="t" style="left:493.00px;top:403.08px;font-size:7.2px;color:rgba(180,205,130,0.75);font-style:italic;transform:scaleX(1.0926);z-index:4;">Blendspace Player</div>
<div class="t" style="left:493.00px;top:411.98px;font-size:7.2px;color:rgba(180,205,130,0.75);font-style:italic;transform:scaleX(1.1791);z-index:4;">Sync group Locomotion</div>
<svg class="abs" width="16" height="12" style="left:489.60px;top:426.20px"><circle cx="6" cy="6" r="3.8" fill="#99f246" stroke="rgba(0,0,0,0.35)" stroke-width="0.6" paint-order="stroke"/><path d="M10.1,4.4 L12.6,6 L10.1,7.6 Z" fill="#99f246"/></svg>
<div class="t" style="left:505.10px;top:427.86px;font-size:8px;color:#ececec;transform:scaleX(1.0622);z-index:4;">Stride</div>
<svg class="abs" width="16" height="12" style="left:489.60px;top:443.40px"><circle cx="6" cy="6" r="3.8" fill="#99f246" stroke="rgba(0,0,0,0.35)" stroke-width="0.6" paint-order="stroke"/><path d="M10.1,4.4 L12.6,6 L10.1,7.6 Z" fill="#99f246"/></svg>
<div class="t" style="left:505.10px;top:445.06px;font-size:8px;color:#ececec;z-index:4;">Walk / Run</div>
<svg class="abs" width="16" height="12" style="left:489.60px;top:460.60px"><circle cx="6" cy="6" r="3.8" fill="#99f246" stroke="rgba(0,0,0,0.35)" stroke-width="0.6" paint-order="stroke"/><path d="M10.1,4.4 L12.6,6 L10.1,7.6 Z" fill="#99f246"/></svg>
<div class="t" style="left:505.10px;top:462.26px;font-size:8px;color:#ececec;transform:scaleX(0.9514);z-index:4;">Play Rate</div>
<svg class="abs" width="6.30" height="18.89" viewBox="-1 -1 14 38" preserveAspectRatio="none" style="left:586.45px;top:427.65px"><g fill="#f2f2f2" stroke="rgba(0,0,0,0.4)" stroke-width="0.7" paint-order="stroke"><ellipse cx="6.1" cy="2.4" rx="2.3" ry="2.4"/><path d="M4.4,4.8 L7.8,4.8 L11,6 L11.8,8.2 L12,19.5 L10.8,20.9 L10.4,33.6 L11.5,35.9 L7.1,35.9 L6.9,23 L5.1,23 L4.7,35.9 L0.4,35.9 L1.5,33.6 L1.2,20.9 L0,19.5 L0.2,8.2 L1,6 Z"/></g><path d="M2.6,9.5 L2.4,19 M9.5,9.5 L9.7,19" stroke="rgba(0,0,0,0.35)" stroke-width="0.6"/></svg>
<svg class="abs" width="18" height="18" viewBox="-9 -9 18 18" style="left:594.40px;top:374.20px;z-index:5"><circle cx="0" cy="0" r="6.95" fill="none" stroke="#fff" stroke-width="1.5"/><path d="M-1.8,-3.7 L2.8,-4 L1.0,-0.7 L2.8,0.2 L-2.2,4.9 L-0.8,1.3 L-3.3,0.8 Z" fill="#fff"/></svg>
<div class="nd" style="left:484.2px;top:481.29999999999995px;width:118.40px;height:92.60px"><div class="hd" style="height:36.90px;background:linear-gradient(180deg,rgba(255,255,255,0.2) 0,rgba(255,255,255,0.0) 2.5px,rgba(0,0,0,0.0) 18%,rgba(0,0,0,0.42) 50%,rgba(0,0,0,0.22) 72%,rgba(0,0,0,0) 100%),linear-gradient(90deg,rgb(86,138,86) 0px,rgb(86,138,86) 79.7px,rgb(44,46,44) 118.4px,rgb(38,40,38) 100%)"></div></div>
<div class="t" style="left:493.00px;top:485.29px;font-size:9.4px;color:#f2f2f2;font-weight:bold;text-shadow:0 1px 1px rgba(0,0,0,0.55),0 0 4px rgba(0,0,0,0.35);transform:scaleX(0.8754);z-index:4;">ALS_N_WalkRun_BR</div>
<div class="t" style="left:493.00px;top:500.28px;font-size:7.2px;color:rgba(180,205,130,0.75);font-style:italic;transform:scaleX(1.0926);z-index:4;">Blendspace Player</div>
<div class="t" style="left:493.00px;top:509.18px;font-size:7.2px;color:rgba(180,205,130,0.75);font-style:italic;transform:scaleX(1.1791);z-index:4;">Sync group Locomotion</div>
<svg class="abs" width="16" height="12" style="left:489.60px;top:523.40px"><circle cx="6" cy="6" r="3.8" fill="#99f246" stroke="rgba(0,0,0,0.35)" stroke-width="0.6" paint-order="stroke"/><path d="M10.1,4.4 L12.6,6 L10.1,7.6 Z" fill="#99f246"/></svg>
<div class="t" style="left:505.10px;top:525.06px;font-size:8px;color:#ececec;transform:scaleX(1.0622);z-index:4;">Stride</div>
<svg class="abs" width="16" height="12" style="left:489.60px;top:540.60px"><circle cx="6" cy="6" r="3.8" fill="#99f246" stroke="rgba(0,0,0,0.35)" stroke-width="0.6" paint-order="stroke"/><path d="M10.1,4.4 L12.6,6 L10.1,7.6 Z" fill="#99f246"/></svg>
<div class="t" style="left:505.10px;top:542.26px;font-size:8px;color:#ececec;z-index:4;">Walk / Run</div>
<svg class="abs" width="16" height="12" style="left:489.60px;top:557.80px"><circle cx="6" cy="6" r="3.8" fill="#99f246" stroke="rgba(0,0,0,0.35)" stroke-width="0.6" paint-order="stroke"/><path d="M10.1,4.4 L12.6,6 L10.1,7.6 Z" fill="#99f246"/></svg>
<div class="t" style="left:505.10px;top:559.46px;font-size:8px;color:#ececec;transform:scaleX(0.9514);z-index:4;">Play Rate</div>
<svg class="abs" width="6.30" height="18.89" viewBox="-1 -1 14 38" preserveAspectRatio="none" style="left:586.45px;top:524.85px"><g fill="#f2f2f2" stroke="rgba(0,0,0,0.4)" stroke-width="0.7" paint-order="stroke"><ellipse cx="6.1" cy="2.4" rx="2.3" ry="2.4"/><path d="M4.4,4.8 L7.8,4.8 L11,6 L11.8,8.2 L12,19.5 L10.8,20.9 L10.4,33.6 L11.5,35.9 L7.1,35.9 L6.9,23 L5.1,23 L4.7,35.9 L0.4,35.9 L1.5,33.6 L1.2,20.9 L0,19.5 L0.2,8.2 L1,6 Z"/></g><path d="M2.6,9.5 L2.4,19 M9.5,9.5 L9.7,19" stroke="rgba(0,0,0,0.35)" stroke-width="0.6"/></svg>
<svg class="abs" width="18" height="18" viewBox="-9 -9 18 18" style="left:594.40px;top:471.40px;z-index:5"><circle cx="0" cy="0" r="6.95" fill="none" stroke="#fff" stroke-width="1.5"/><path d="M-1.8,-3.7 L2.8,-4 L1.0,-0.7 L2.8,0.2 L-2.2,4.9 L-0.8,1.3 L-3.3,0.8 Z" fill="#fff"/></svg>
<div class="vn" style="left:332.2px;top:276.6px;width:89.30000000000001px;height:20.19999999999999px"></div>
<div class="t" style="left:354.30px;top:282.64px;font-size:7.8px;color:#e8e8e8;transform:scaleX(1.0354);z-index:4;">Stride Blend</div>
<svg class="abs" width="16" height="12" style="left:399.60px;top:280.60px"><circle cx="6" cy="6" r="3.8" fill="#99f246" stroke="rgba(0,0,0,0.35)" stroke-width="0.6" paint-order="stroke"/><path d="M10.1,4.4 L12.6,6 L10.1,7.6 Z" fill="#99f246"/></svg>
<div class="vn" style="left:332.2px;top:298.2px;width:92.30000000000001px;height:20.19999999999999px"></div>
<div class="t" style="left:345.20px;top:304.34px;font-size:7.8px;color:#e8e8e8;transform:scaleX(1.0119);z-index:4;">Walk Run Blend</div>
<svg class="abs" width="16" height="12" style="left:402.60px;top:302.30px"><circle cx="6" cy="6" r="3.8" fill="#99f246" stroke="rgba(0,0,0,0.35)" stroke-width="0.6" paint-order="stroke"/><path d="M10.1,4.4 L12.6,6 L10.1,7.6 Z" fill="#99f246"/></svg>
<div class="vn" style="left:332.2px;top:319.8px;width:104.5px;height:20.5px"></div>
<div class="t" style="left:345.10px;top:326.44px;font-size:7.8px;color:#e8e8e8;transform:scaleX(1.0348);z-index:4;">Standing Play Rate</div>
<svg class="abs" width="16" height="12" style="left:414.90px;top:324.40px"><circle cx="6" cy="6" r="3.8" fill="#99f246" stroke="rgba(0,0,0,0.35)" stroke-width="0.6" paint-order="stroke"/><path d="M10.1,4.4 L12.6,6 L10.1,7.6 Z" fill="#99f246"/></svg>
<div class="nd" style="left:656.7px;top:265.4px;width:180.50px;height:219.60px"><div class="hd" style="height:25.30px;background:linear-gradient(180deg,rgba(255,255,255,0.2) 0,rgba(255,255,255,0.0) 2.5px,rgba(0,0,0,0.0) 18%,rgba(0,0,0,0.42) 50%,rgba(0,0,0,0.22) 72%,rgba(0,0,0,0) 100%),linear-gradient(90deg,rgb(96,96,160) 0px,rgb(96,96,160) 149.4px,rgb(44,46,44) 180.5px,rgb(38,40,38) 100%)"></div></div>
<div class="t" style="left:666.30px;top:268.69px;font-size:9.4px;color:#f2f2f2;font-weight:bold;text-shadow:0 1px 1px rgba(0,0,0,0.55),0 0 4px rgba(0,0,0,0.35);transform:scaleX(0.8906);z-index:4;">Linked Anim Layer: (N) CycleBlending</div>
<div class="t" style="left:666.30px;top:281.18px;font-size:7.2px;color:rgba(190,190,210,0.7);font-style:italic;transform:scaleX(1.0881);z-index:4;">Self</div>
<svg class="abs" width="6.30" height="18.89" viewBox="-1 -1 14 38" preserveAspectRatio="none" style="left:666.55px;top:298.05px"><g fill="#f2f2f2" stroke="rgba(0,0,0,0.4)" stroke-width="0.7" paint-order="stroke"><ellipse cx="6.1" cy="2.4" rx="2.3" ry="2.4"/><path d="M4.4,4.8 L7.8,4.8 L11,6 L11.8,8.2 L12,19.5 L10.8,20.9 L10.4,33.6 L11.5,35.9 L7.1,35.9 L6.9,23 L5.1,23 L4.7,35.9 L0.4,35.9 L1.5,33.6 L1.2,20.9 L0,19.5 L0.2,8.2 L1,6 Z"/></g><path d="M2.6,9.5 L2.4,19 M9.5,9.5 L9.7,19" stroke="rgba(0,0,0,0.35)" stroke-width="0.6"/></svg>
<div class="t" style="left:678.00px;top:303.54px;font-size:7.8px;color:#ececec;transform:scaleX(0.8605);z-index:4;">F</div>
<svg class="abs" width="6.30" height="18.89" viewBox="-1 -1 14 38" preserveAspectRatio="none" style="left:666.55px;top:325.05px"><g fill="#f2f2f2" stroke="rgba(0,0,0,0.4)" stroke-width="0.7" paint-order="stroke"><ellipse cx="6.1" cy="2.4" rx="2.3" ry="2.4"/><path d="M4.4,4.8 L7.8,4.8 L11,6 L11.8,8.2 L12,19.5 L10.8,20.9 L10.4,33.6 L11.5,35.9 L7.1,35.9 L6.9,23 L5.1,23 L4.7,35.9 L0.4,35.9 L1.5,33.6 L1.2,20.9 L0,19.5 L0.2,8.2 L1,6 Z"/></g><path d="M2.6,9.5 L2.4,19 M9.5,9.5 L9.7,19" stroke="rgba(0,0,0,0.35)" stroke-width="0.6"/></svg>
<div class="t" style="left:678.00px;top:330.54px;font-size:7.8px;color:#ececec;transform:scaleX(0.9226);z-index:4;">B</div>
<svg class="abs" width="6.30" height="18.89" viewBox="-1 -1 14 38" preserveAspectRatio="none" style="left:666.55px;top:352.05px"><g fill="#f2f2f2" stroke="rgba(0,0,0,0.4)" stroke-width="0.7" paint-order="stroke"><ellipse cx="6.1" cy="2.4" rx="2.3" ry="2.4"/><path d="M4.4,4.8 L7.8,4.8 L11,6 L11.8,8.2 L12,19.5 L10.8,20.9 L10.4,33.6 L11.5,35.9 L7.1,35.9 L6.9,23 L5.1,23 L4.7,35.9 L0.4,35.9 L1.5,33.6 L1.2,20.9 L0,19.5 L0.2,8.2 L1,6 Z"/></g><path d="M2.6,9.5 L2.4,19 M9.5,9.5 L9.7,19" stroke="rgba(0,0,0,0.35)" stroke-width="0.6"/></svg>
<div class="t" style="left:678.00px;top:357.54px;font-size:7.8px;color:#ececec;transform:scaleX(0.8898);z-index:4;">LF</div>
<svg class="abs" width="6.30" height="18.89" viewBox="-1 -1 14 38" preserveAspectRatio="none" style="left:666.55px;top:379.05px"><g fill="#f2f2f2" stroke="rgba(0,0,0,0.4)" stroke-width="0.7" paint-order="stroke"><ellipse cx="6.1" cy="2.4" rx="2.3" ry="2.4"/><path d="M4.4,4.8 L7.8,4.8 L11,6 L11.8,8.2 L12,19.5 L10.8,20.9 L10.4,33.6 L11.5,35.9 L7.1,35.9 L6.9,23 L5.1,23 L4.7,35.9 L0.4,35.9 L1.5,33.6 L1.2,20.9 L0,19.5 L0.2,8.2 L1,6 Z"/></g><path d="M2.6,9.5 L2.4,19 M9.5,9.5 L9.7,19" stroke="rgba(0,0,0,0.35)" stroke-width="0.6"/></svg>
<div class="t" style="left:678.00px;top:384.54px;font-size:7.8px;color:#ececec;transform:scaleX(0.9014);z-index:4;">LB</div>
<svg class="abs" width="6.30" height="18.89" viewBox="-1 -1 14 38" preserveAspectRatio="none" style="left:666.55px;top:406.05px"><g fill="#f2f2f2" stroke="rgba(0,0,0,0.4)" stroke-width="0.7" paint-order="stroke"><ellipse cx="6.1" cy="2.4" rx="2.3" ry="2.4"/><path d="M4.4,4.8 L7.8,4.8 L11,6 L11.8,8.2 L12,19.5 L10.8,20.9 L10.4,33.6 L11.5,35.9 L7.1,35.9 L6.9,23 L5.1,23 L4.7,35.9 L0.4,35.9 L1.5,33.6 L1.2,20.9 L0,19.5 L0.2,8.2 L1,6 Z"/></g><path d="M2.6,9.5 L2.4,19 M9.5,9.5 L9.7,19" stroke="rgba(0,0,0,0.35)" stroke-width="0.6"/></svg>
<div class="t" style="left:678.00px;top:411.54px;font-size:7.8px;color:#ececec;transform:scaleX(0.8463);z-index:4;">RF</div>
<svg class="abs" width="6.30" height="18.89" viewBox="-1 -1 14 38" preserveAspectRatio="none" style="left:666.55px;top:433.05px"><g fill="#f2f2f2" stroke="rgba(0,0,0,0.4)" stroke-width="0.7" paint-order="stroke"><ellipse cx="6.1" cy="2.4" rx="2.3" ry="2.4"/><path d="M4.4,4.8 L7.8,4.8 L11,6 L11.8,8.2 L12,19.5 L10.8,20.9 L10.4,33.6 L11.5,35.9 L7.1,35.9 L6.9,23 L5.1,23 L4.7,35.9 L0.4,35.9 L1.5,33.6 L1.2,20.9 L0,19.5 L0.2,8.2 L1,6 Z"/></g><path d="M2.6,9.5 L2.4,19 M9.5,9.5 L9.7,19" stroke="rgba(0,0,0,0.35)" stroke-width="0.6"/></svg>
<div class="t" style="left:678.00px;top:438.54px;font-size:7.8px;color:#ececec;transform:scaleX(0.8675);z-index:4;">RB</div>
<svg class="abs" width="6.30" height="18.89" viewBox="-1 -1 14 38" preserveAspectRatio="none" style="left:666.55px;top:460.05px"><g fill="#f2f2f2" stroke="rgba(0,0,0,0.4)" stroke-width="0.7" paint-order="stroke"><ellipse cx="6.1" cy="2.4" rx="2.3" ry="2.4"/><path d="M4.4,4.8 L7.8,4.8 L11,6 L11.8,8.2 L12,19.5 L10.8,20.9 L10.4,33.6 L11.5,35.9 L7.1,35.9 L6.9,23 L5.1,23 L4.7,35.9 L0.4,35.9 L1.5,33.6 L1.2,20.9 L0,19.5 L0.2,8.2 L1,6 Z"/></g><path d="M2.6,9.5 L2.4,19 M9.5,9.5 L9.7,19" stroke="rgba(0,0,0,0.35)" stroke-width="0.6"/></svg>
<div class="t" style="left:678.00px;top:465.54px;font-size:7.8px;color:#ececec;transform:scaleX(1.1140);z-index:4;">Sprint</div>
<svg class="abs" width="6.30" height="18.89" viewBox="-1 -1 14 38" preserveAspectRatio="none" style="left:821.45px;top:297.75px"><g fill="#f2f2f2" stroke="rgba(0,0,0,0.4)" stroke-width="0.7" paint-order="stroke"><ellipse cx="6.1" cy="2.4" rx="2.3" ry="2.4"/><path d="M4.4,4.8 L7.8,4.8 L11,6 L11.8,8.2 L12,19.5 L10.8,20.9 L10.4,33.6 L11.5,35.9 L7.1,35.9 L6.9,23 L5.1,23 L4.7,35.9 L0.4,35.9 L1.5,33.6 L1.2,20.9 L0,19.5 L0.2,8.2 L1,6 Z"/></g><path d="M2.6,9.5 L2.4,19 M9.5,9.5 L9.7,19" stroke="rgba(0,0,0,0.35)" stroke-width="0.6"/></svg>
<div class="nd" style="left:850.9px;top:275.9px;width:112.70px;height:46.60px"><div class="hd" style="height:15.30px;background:linear-gradient(180deg,rgba(255,255,255,0.22) 0,rgba(255,255,255,0.0) 2.5px,rgba(0,0,0,0.0) 30%,rgba(0,0,0,0.15) 60%,rgba(0,0,0,0.05) 100%),linear-gradient(90deg,rgb(128,128,128) 0px,rgb(128,128,128) 80.3px,rgb(46,46,46) 112.7px,rgb(38,40,38) 100%)"></div></div>
<div class="t" style="left:860.30px;top:280.29px;font-size:9.4px;color:#f2f2f2;font-weight:bold;text-shadow:0 1px 1px rgba(0,0,0,0.55),0 0 4px rgba(0,0,0,0.35);transform:scaleX(0.8935);z-index:4;">Local To Component</div>
<svg class="abs" width="6.30" height="18.89" viewBox="-1 -1 14 38" preserveAspectRatio="none" style="left:860.35px;top:298.05px"><g fill="#f2f2f2" stroke="rgba(0,0,0,0.4)" stroke-width="0.7" paint-order="stroke"><ellipse cx="6.1" cy="2.4" rx="2.3" ry="2.4"/><path d="M4.4,4.8 L7.8,4.8 L11,6 L11.8,8.2 L12,19.5 L10.8,20.9 L10.4,33.6 L11.5,35.9 L7.1,35.9 L6.9,23 L5.1,23 L4.7,35.9 L0.4,35.9 L1.5,33.6 L1.2,20.9 L0,19.5 L0.2,8.2 L1,6 Z"/></g><path d="M2.6,9.5 L2.4,19 M9.5,9.5 L9.7,19" stroke="rgba(0,0,0,0.35)" stroke-width="0.6"/></svg>
<svg class="abs" width="6.30" height="18.89" viewBox="-1 -1 14 38" preserveAspectRatio="none" style="left:946.55px;top:298.05px"><g fill="#5ea6ec" stroke="rgba(0,0,0,0.4)" stroke-width="0.7" paint-order="stroke"><ellipse cx="6.1" cy="2.4" rx="2.3" ry="2.4"/><path d="M4.4,4.8 L7.8,4.8 L11,6 L11.8,8.2 L12,19.5 L10.8,20.9 L10.4,33.6 L11.5,35.9 L7.1,35.9 L6.9,23 L5.1,23 L4.7,35.9 L0.4,35.9 L1.5,33.6 L1.2,20.9 L0,19.5 L0.2,8.2 L1,6 Z"/></g><path d="M2.6,9.5 L2.4,19 M9.5,9.5 L9.7,19" stroke="rgba(0,0,0,0.35)" stroke-width="0.6"/></svg>
<div class="nd" style="left:970.7px;top:265.4px;width:129.50px;height:73.80px"><div class="hd" style="height:25.60px;background:linear-gradient(180deg,rgba(255,255,255,0.2) 0,rgba(255,255,255,0.0) 2.5px,rgba(0,0,0,0.0) 18%,rgba(0,0,0,0.42) 50%,rgba(0,0,0,0.22) 72%,rgba(0,0,0,0) 100%),linear-gradient(90deg,rgb(128,128,66) 0px,rgb(128,128,66) 96.7px,rgb(44,46,44) 129.5px,rgb(38,40,38) 100%)"></div></div>
<div class="t" style="left:979.60px;top:268.69px;font-size:9.4px;color:#f2f2f2;font-weight:bold;text-shadow:0 1px 1px rgba(0,0,0,0.55),0 0 4px rgba(0,0,0,0.35);transform:scaleX(0.8972);z-index:4;">Transform (Modify) Bone</div>
<div class="t" style="left:979.60px;top:281.48px;font-size:7.2px;color:rgba(200,200,140,0.6);font-style:italic;transform:scaleX(1.1636);z-index:4;">Bone: ik_foot_root</div>
<svg class="abs" width="6.30" height="18.89" viewBox="-1 -1 14 38" preserveAspectRatio="none" style="left:979.15px;top:298.05px"><g fill="#5ea6ec" stroke="rgba(0,0,0,0.4)" stroke-width="0.7" paint-order="stroke"><ellipse cx="6.1" cy="2.4" rx="2.3" ry="2.4"/><path d="M4.4,4.8 L7.8,4.8 L11,6 L11.8,8.2 L12,19.5 L10.8,20.9 L10.4,33.6 L11.5,35.9 L7.1,35.9 L6.9,23 L5.1,23 L4.7,35.9 L0.4,35.9 L1.5,33.6 L1.2,20.9 L0,19.5 L0.2,8.2 L1,6 Z"/></g><path d="M2.6,9.5 L2.4,19 M9.5,9.5 L9.7,19" stroke="rgba(0,0,0,0.35)" stroke-width="0.6"/></svg>
<div class="t" style="left:991.10px;top:303.54px;font-size:7.8px;color:#e6e6e6;transform:scaleX(1.0602);z-index:4;">Component Pose</div>
<svg class="abs" width="6.30" height="18.89" viewBox="-1 -1 14 38" preserveAspectRatio="none" style="left:1083.25px;top:298.05px"><g fill="#5ea6ec" stroke="rgba(0,0,0,0.4)" stroke-width="0.7" paint-order="stroke"><ellipse cx="6.1" cy="2.4" rx="2.3" ry="2.4"/><path d="M4.4,4.8 L7.8,4.8 L11,6 L11.8,8.2 L12,19.5 L10.8,20.9 L10.4,33.6 L11.5,35.9 L7.1,35.9 L6.9,23 L5.1,23 L4.7,35.9 L0.4,35.9 L1.5,33.6 L1.2,20.9 L0,19.5 L0.2,8.2 L1,6 Z"/></g><path d="M2.6,9.5 L2.4,19 M9.5,9.5 L9.7,19" stroke="rgba(0,0,0,0.35)" stroke-width="0.6"/></svg>
<svg class="abs" width="16" height="12" style="left:976.30px;top:323.50px"><circle cx="6" cy="6" r="3.8" fill="#99f246" stroke="rgba(0,0,0,0.35)" stroke-width="0.6" paint-order="stroke"/><path d="M10.1,4.4 L12.6,6 L10.1,7.6 Z" fill="#99f246"/></svg>
<div class="t" style="left:991.10px;top:325.74px;font-size:7.8px;color:#e6e6e6;z-index:4;">Alpha</div>
<svg class="abs" width="18" height="18" viewBox="-9 -9 18 18" style="left:1091.40px;top:255.90px;z-index:5"><circle cx="0" cy="0" r="6.95" fill="none" stroke="#fff" stroke-width="1.5"/><path d="M-1.8,-3.7 L2.8,-4 L1.0,-0.7 L2.8,0.2 L-2.2,4.9 L-0.8,1.3 L-3.3,0.8 Z" fill="#fff"/></svg>
<div class="vn" style="left:970.6px;top:340.9px;width:118.99999999999989px;height:21.200000000000045px"></div>
<div class="t" style="left:982.20px;top:347.74px;font-size:7.8px;color:#e8e8e8;transform:scaleX(1.0396);z-index:4;">Diagonal Scale Amount</div>
<svg class="abs" width="16" height="12" style="left:1067.60px;top:345.30px"><circle cx="6" cy="6" r="3.8" fill="#99f246" stroke="rgba(0,0,0,0.35)" stroke-width="0.6" paint-order="stroke"/><path d="M10.1,4.4 L12.6,6 L10.1,7.6 Z" fill="#99f246"/></svg>
<div class="nd" style="left:1110px;top:275.9px;width:112.20px;height:46.60px"><div class="hd" style="height:15.30px;background:linear-gradient(180deg,rgba(255,255,255,0.22) 0,rgba(255,255,255,0.0) 2.5px,rgba(0,0,0,0.0) 30%,rgba(0,0,0,0.15) 60%,rgba(0,0,0,0.05) 100%),linear-gradient(90deg,rgb(128,128,128) 0px,rgb(128,128,128) 79.5px,rgb(46,46,46) 112.2px,rgb(38,40,38) 100%)"></div></div>
<div class="t" style="left:1119.50px;top:280.29px;font-size:9.4px;color:#f2f2f2;font-weight:bold;text-shadow:0 1px 1px rgba(0,0,0,0.55),0 0 4px rgba(0,0,0,0.35);transform:scaleX(0.8838);z-index:4;">Component To Local</div>
<svg class="abs" width="6.30" height="18.89" viewBox="-1 -1 14 38" preserveAspectRatio="none" style="left:1119.35px;top:298.05px"><g fill="#5ea6ec" stroke="rgba(0,0,0,0.4)" stroke-width="0.7" paint-order="stroke"><ellipse cx="6.1" cy="2.4" rx="2.3" ry="2.4"/><path d="M4.4,4.8 L7.8,4.8 L11,6 L11.8,8.2 L12,19.5 L10.8,20.9 L10.4,33.6 L11.5,35.9 L7.1,35.9 L6.9,23 L5.1,23 L4.7,35.9 L0.4,35.9 L1.5,33.6 L1.2,20.9 L0,19.5 L0.2,8.2 L1,6 Z"/></g><path d="M2.6,9.5 L2.4,19 M9.5,9.5 L9.7,19" stroke="rgba(0,0,0,0.35)" stroke-width="0.6"/></svg>
<svg class="abs" width="6.30" height="18.89" viewBox="-1 -1 14 38" preserveAspectRatio="none" style="left:1206.45px;top:298.05px"><g fill="#f2f2f2" stroke="rgba(0,0,0,0.4)" stroke-width="0.7" paint-order="stroke"><ellipse cx="6.1" cy="2.4" rx="2.3" ry="2.4"/><path d="M4.4,4.8 L7.8,4.8 L11,6 L11.8,8.2 L12,19.5 L10.8,20.9 L10.4,33.6 L11.5,35.9 L7.1,35.9 L6.9,23 L5.1,23 L4.7,35.9 L0.4,35.9 L1.5,33.6 L1.2,20.9 L0,19.5 L0.2,8.2 L1,6 Z"/></g><path d="M2.6,9.5 L2.4,19 M9.5,9.5 L9.7,19" stroke="rgba(0,0,0,0.35)" stroke-width="0.6"/></svg>
<div class="sn" style="left:1250.5px;top:362.7px;width:94.4px;height:38.9px;background:linear-gradient(180deg,rgba(140,190,250,0.7) 0,rgba(140,190,250,0) 2.5px),radial-gradient(ellipse 60% 40% at 50% 0%,rgba(90,140,210,0.85) 0%,rgba(90,140,210,0) 100%),linear-gradient(180deg,rgba(84,86,88,0.9) 0%,rgba(62,64,65,0.88) 50%,rgba(50,52,52,0.9) 100%)"></div>
<div class="t" style="left:1262.80px;top:369.54px;font-size:7.8px;color:#e6e6e6;transform:scaleX(1.0394);z-index:4;">Lean Amount LR</div>
<div class="t" style="left:1262.80px;top:386.54px;font-size:7.8px;color:#e6e6e6;transform:scaleX(1.0395);z-index:4;">Lean Amount FB</div>
<svg class="abs" width="16" height="12" style="left:1323.60px;top:367.50px"><circle cx="6" cy="6" r="3.8" fill="#99f246" stroke="rgba(0,0,0,0.35)" stroke-width="0.6" paint-order="stroke"/><path d="M10.1,4.4 L12.6,6 L10.1,7.6 Z" fill="#99f246"/></svg>
<svg class="abs" width="16" height="12" style="left:1323.60px;top:384.50px"><circle cx="6" cy="6" r="3.8" fill="#99f246" stroke="rgba(0,0,0,0.35)" stroke-width="0.6" paint-order="stroke"/><path d="M10.1,4.4 L12.6,6 L10.1,7.6 Z" fill="#99f246"/></svg>
<div class="nd" style="left:1348.7px;top:331.3px;width:93.80px;height:62.70px"><div class="hd" style="height:24.50px;background:linear-gradient(180deg,rgba(255,255,255,0.2) 0,rgba(255,255,255,0.0) 2.5px,rgba(0,0,0,0.0) 18%,rgba(0,0,0,0.42) 50%,rgba(0,0,0,0.22) 72%,rgba(0,0,0,0) 100%),linear-gradient(90deg,rgb(86,138,86) 0px,rgb(86,138,86) 47.9px,rgb(44,46,44) 86.9px,rgb(38,40,38) 100%)"></div></div>
<div class="t" style="left:1356.60px;top:335.49px;font-size:9.4px;color:#f2f2f2;font-weight:bold;text-shadow:0 1px 1px rgba(0,0,0,0.55),0 0 4px rgba(0,0,0,0.35);transform:scaleX(0.8968);z-index:4;">ALS_N_Lean</div>
<div class="t" style="left:1356.60px;top:346.98px;font-size:7.2px;color:rgba(180,205,130,0.75);font-style:italic;transform:scaleX(1.0926);z-index:4;">Blendspace Player</div>
<svg class="abs" width="16" height="12" style="left:1353.50px;top:361.60px"><circle cx="6" cy="6" r="3.8" fill="#99f246" stroke="rgba(0,0,0,0.35)" stroke-width="0.6" paint-order="stroke"/><path d="M10.1,4.4 L12.6,6 L10.1,7.6 Z" fill="#99f246"/></svg>
<div class="t" style="left:1368.30px;top:363.74px;font-size:7.8px;color:#e6e6e6;transform:scaleX(0.9728);z-index:4;">LR</div>
<svg class="abs" width="16" height="12" style="left:1353.50px;top:378.60px"><circle cx="6" cy="6" r="3.8" fill="#99f246" stroke="rgba(0,0,0,0.35)" stroke-width="0.6" paint-order="stroke"/><path d="M10.1,4.4 L12.6,6 L10.1,7.6 Z" fill="#99f246"/></svg>
<div class="t" style="left:1368.30px;top:380.74px;font-size:7.8px;color:#e6e6e6;transform:scaleX(0.9732);z-index:4;">FB</div>
<svg class="abs" width="6.30" height="18.89" viewBox="-1 -1 14 38" preserveAspectRatio="none" style="left:1426.15px;top:363.55px"><g fill="#f2f2f2" stroke="rgba(0,0,0,0.4)" stroke-width="0.7" paint-order="stroke"><ellipse cx="6.1" cy="2.4" rx="2.3" ry="2.4"/><path d="M4.4,4.8 L7.8,4.8 L11,6 L11.8,8.2 L12,19.5 L10.8,20.9 L10.4,33.6 L11.5,35.9 L7.1,35.9 L6.9,23 L5.1,23 L4.7,35.9 L0.4,35.9 L1.5,33.6 L1.2,20.9 L0,19.5 L0.2,8.2 L1,6 Z"/></g><path d="M2.6,9.5 L2.4,19 M9.5,9.5 L9.7,19" stroke="rgba(0,0,0,0.35)" stroke-width="0.6"/></svg>
<svg class="abs" width="18" height="18" viewBox="-9 -9 18 18" style="left:1434.40px;top:320.50px;z-index:5"><circle cx="0" cy="0" r="6.95" fill="none" stroke="#fff" stroke-width="1.5"/><path d="M-1.8,-3.7 L2.8,-4 L1.0,-0.7 L2.8,0.2 L-2.2,4.9 L-0.8,1.3 L-3.3,0.8 Z" fill="#fff"/></svg>
<div class="nd" style="left:1450.8px;top:276.2px;width:255.20px;height:101.60px"><div class="hd" style="height:13.60px;background:linear-gradient(180deg,rgba(255,255,255,0.22) 0,rgba(255,255,255,0.0) 2.5px,rgba(0,0,0,0.0) 30%,rgba(0,0,0,0.15) 60%,rgba(0,0,0,0.05) 100%),linear-gradient(90deg,rgb(128,128,128) 0px,rgb(128,128,128) 56.2px,rgb(46,46,46) 95.2px,rgb(38,40,38) 100%)"></div></div>
<div class="t" style="left:1459.00px;top:279.69px;font-size:9.4px;color:#f2f2f2;font-weight:bold;text-shadow:0 1px 1px rgba(0,0,0,0.55),0 0 4px rgba(0,0,0,0.35);transform:scaleX(0.9166);z-index:4;">Apply Additive</div>
<svg class="abs" width="6.30" height="18.89" viewBox="-1 -1 14 38" preserveAspectRatio="none" style="left:1459.45px;top:296.95px"><g fill="#f2f2f2" stroke="rgba(0,0,0,0.4)" stroke-width="0.7" paint-order="stroke"><ellipse cx="6.1" cy="2.4" rx="2.3" ry="2.4"/><path d="M4.4,4.8 L7.8,4.8 L11,6 L11.8,8.2 L12,19.5 L10.8,20.9 L10.4,33.6 L11.5,35.9 L7.1,35.9 L6.9,23 L5.1,23 L4.7,35.9 L0.4,35.9 L1.5,33.6 L1.2,20.9 L0,19.5 L0.2,8.2 L1,6 Z"/></g><path d="M2.6,9.5 L2.4,19 M9.5,9.5 L9.7,19" stroke="rgba(0,0,0,0.35)" stroke-width="0.6"/></svg>
<div class="t" style="left:1470.80px;top:302.54px;font-size:7.8px;color:#e6e6e6;transform:scaleX(0.9899);z-index:4;">Base</div>
<svg class="abs" width="6.30" height="18.89" viewBox="-1 -1 14 38" preserveAspectRatio="none" style="left:1459.45px;top:323.85px"><g fill="#f2f2f2" stroke="rgba(0,0,0,0.4)" stroke-width="0.7" paint-order="stroke"><ellipse cx="6.1" cy="2.4" rx="2.3" ry="2.4"/><path d="M4.4,4.8 L7.8,4.8 L11,6 L11.8,8.2 L12,19.5 L10.8,20.9 L10.4,33.6 L11.5,35.9 L7.1,35.9 L6.9,23 L5.1,23 L4.7,35.9 L0.4,35.9 L1.5,33.6 L1.2,20.9 L0,19.5 L0.2,8.2 L1,6 Z"/></g><path d="M2.6,9.5 L2.4,19 M9.5,9.5 L9.7,19" stroke="rgba(0,0,0,0.35)" stroke-width="0.6"/></svg>
<div class="t" style="left:1470.80px;top:329.54px;font-size:7.8px;color:#e6e6e6;transform:scaleX(1.1099);z-index:4;">Additive</div>
<div class="t" style="left:1470.80px;top:351.54px;font-size:7.8px;color:#e6e6e6;transform:scaleX(1.0550);z-index:4;">FInterp(Clamp(-1 + Alpha Curve Name, 0.5, 1), (20:1))</div>
<svg class="abs" width="16" height="12" style="left:1456.00px;top:355.70px"><circle cx="6" cy="6" r="3.1" fill="none" stroke="#b070e8" stroke-width="1.5"/><path d="M10.1,4.4 L12.6,6 L10.1,7.6 Z" fill="#b070e8"/></svg>
<div class="abs" style="left:1475.2px;top:360.3px;width:49.8px;height:12.4px;border:1px solid #a6a6a6;box-sizing:border-box;z-index:4"></div>
<div class="t" style="left:1478.50px;top:362.92px;font-size:7.6px;color:#d8d8d8;transform:scaleX(1.0316);z-index:4;">Weight_Gait</div>
<svg class="abs" width="6.30" height="18.89" viewBox="-1 -1 14 38" preserveAspectRatio="none" style="left:1690.25px;top:296.95px"><g fill="#f2f2f2" stroke="rgba(0,0,0,0.4)" stroke-width="0.7" paint-order="stroke"><ellipse cx="6.1" cy="2.4" rx="2.3" ry="2.4"/><path d="M4.4,4.8 L7.8,4.8 L11,6 L11.8,8.2 L12,19.5 L10.8,20.9 L10.4,33.6 L11.5,35.9 L7.1,35.9 L6.9,23 L5.1,23 L4.7,35.9 L0.4,35.9 L1.5,33.6 L1.2,20.9 L0,19.5 L0.2,8.2 L1,6 Z"/></g><path d="M2.6,9.5 L2.4,19 M9.5,9.5 L9.7,19" stroke="rgba(0,0,0,0.35)" stroke-width="0.6"/></svg>
<svg class="abs" width="18" height="18" viewBox="-9 -9 18 18" style="left:1697.60px;top:266.30px;z-index:5"><circle cx="0" cy="0" r="6.95" fill="none" stroke="#fff" stroke-width="1.5"/><path d="M-1.8,-3.7 L2.8,-4 L1.0,-0.7 L2.8,0.2 L-2.2,4.9 L-0.8,1.3 L-3.3,0.8 Z" fill="#fff"/></svg>
<div class="nd" style="left:1726.8px;top:277px;width:143.20px;height:45.00px"><div class="hd" style="height:13.90px;background:linear-gradient(180deg,rgba(255,255,255,0.2) 0,rgba(255,255,255,0.0) 2.5px,rgba(0,0,0,0.0) 18%,rgba(0,0,0,0.42) 50%,rgba(0,0,0,0.22) 72%,rgba(0,0,0,0) 100%),linear-gradient(90deg,rgb(140,116,96) 0px,rgb(140,116,96) 88.8px,rgb(44,46,44) 127.8px,rgb(38,40,38) 100%)"></div></div>
<div class="t" style="left:1735.20px;top:280.29px;font-size:9.4px;color:#f2f2f2;font-weight:bold;text-shadow:0 1px 1px rgba(0,0,0,0.55),0 0 4px rgba(0,0,0,0.35);transform:scaleX(0.8876);z-index:4;">Output Animation Pose</div>
<svg class="abs" width="6.30" height="18.89" viewBox="-1 -1 14 38" preserveAspectRatio="none" style="left:1735.25px;top:297.95px"><g fill="#f2f2f2" stroke="rgba(0,0,0,0.4)" stroke-width="0.7" paint-order="stroke"><ellipse cx="6.1" cy="2.4" rx="2.3" ry="2.4"/><path d="M4.4,4.8 L7.8,4.8 L11,6 L11.8,8.2 L12,19.5 L10.8,20.9 L10.4,33.6 L11.5,35.9 L7.1,35.9 L6.9,23 L5.1,23 L4.7,35.9 L0.4,35.9 L1.5,33.6 L1.2,20.9 L0,19.5 L0.2,8.2 L1,6 Z"/></g><path d="M2.6,9.5 L2.4,19 M9.5,9.5 L9.7,19" stroke="rgba(0,0,0,0.35)" stroke-width="0.6"/></svg>
<div class="t" style="left:1746.80px;top:303.54px;font-size:7.8px;color:#e6e6e6;transform:scaleX(1.0312);z-index:4;">Result</div>
<div class="vn" style="left:-1px;top:676px;width:101.6px;height:21px"></div>
<div class="t" style="left:10.00px;top:682.64px;font-size:7.8px;color:#e8e8e8;transform:scaleX(1.0483);z-index:4;">Standing Play Rate</div>
<svg class="abs" width="16" height="12" style="left:79.70px;top:680.60px"><circle cx="6" cy="6" r="3.8" fill="#99f246" stroke="rgba(0,0,0,0.35)" stroke-width="0.6" paint-order="stroke"/><path d="M10.1,4.4 L12.6,6 L10.1,7.6 Z" fill="#99f246"/></svg>
<div class="abs" style="left:116.5px;top:680px;width:119px;height:10px;background:rgba(30,30,30,0.25);border-radius:0 0 3px 3px;z-index:2"></div>
<div class="abs" style="left:125px;top:685.2px;width:108px;height:2px;background:#f0f0f0;z-index:2"></div>
<div class="abs" style="left:119px;top:682.4px;width:6.2px;height:8px;background:#c8b840;z-index:2"></div>
<div class="nd" style="left:116.5px;top:621.8px;width:119.10px;height:57.50px"><div class="hd" style="height:26.40px;background:linear-gradient(180deg,rgba(255,255,255,0.2) 0,rgba(255,255,255,0.0) 2.5px,rgba(0,0,0,0.0) 18%,rgba(0,0,0,0.42) 50%,rgba(0,0,0,0.22) 72%,rgba(0,0,0,0) 100%),linear-gradient(90deg,rgb(130,78,78) 0px,rgb(130,78,78) 81.8px,rgb(44,46,44) 119.1px,rgb(38,40,38) 100%)"></div></div>
<div class="t" style="left:126.30px;top:625.09px;font-size:9.4px;color:#f2f2f2;font-weight:bold;text-shadow:0 1px 1px rgba(0,0,0,0.55),0 0 4px rgba(0,0,0,0.35);transform:scaleX(0.8771);z-index:4;">Play ALS_N_Sprint_F</div>
<div class="t" style="left:126.30px;top:638.48px;font-size:7.2px;color:rgba(215,185,135,0.72);font-style:italic;transform:scaleX(1.1765);z-index:4;">Sync group Locomotion</div>
<svg class="abs" width="16" height="12" style="left:122.80px;top:652.90px"><circle cx="6" cy="6" r="3.8" fill="#99f246" stroke="rgba(0,0,0,0.35)" stroke-width="0.6" paint-order="stroke"/><path d="M10.1,4.4 L12.6,6 L10.1,7.6 Z" fill="#99f246"/></svg>
<div class="t" style="left:137.90px;top:655.16px;font-size:8px;color:#e6e6e6;transform:scaleX(0.9514);z-index:4;">Play Rate</div>
<svg class="abs" width="6.30" height="18.89" viewBox="-1 -1 14 38" preserveAspectRatio="none" style="left:218.85px;top:654.65px"><g fill="#f2f2f2" stroke="rgba(0,0,0,0.4)" stroke-width="0.7" paint-order="stroke"><ellipse cx="6.1" cy="2.4" rx="2.3" ry="2.4"/><path d="M4.4,4.8 L7.8,4.8 L11,6 L11.8,8.2 L12,19.5 L10.8,20.9 L10.4,33.6 L11.5,35.9 L7.1,35.9 L6.9,23 L5.1,23 L4.7,35.9 L0.4,35.9 L1.5,33.6 L1.2,20.9 L0,19.5 L0.2,8.2 L1,6 Z"/></g><path d="M2.6,9.5 L2.4,19 M9.5,9.5 L9.7,19" stroke="rgba(0,0,0,0.35)" stroke-width="0.6"/></svg>
<svg class="abs" width="18" height="18" viewBox="-9 -9 18 18" style="left:226.60px;top:612.30px;z-index:5"><circle cx="0" cy="0" r="6.95" fill="none" stroke="#fff" stroke-width="1.5"/><path d="M-1.8,-3.7 L2.8,-4 L1.0,-0.7 L2.8,0.2 L-2.2,4.9 L-0.8,1.3 L-3.3,0.8 Z" fill="#fff"/></svg>
<div class="abs" style="left:116.5px;top:743px;width:150.2px;height:14px;background:rgba(20,20,20,0.5);border-radius:0 0 4px 4px;box-shadow:0 1px 1px rgba(0,0,0,0.4);z-index:2"></div>
<div class="abs" style="left:125px;top:751px;width:139.3px;height:2.2px;background:#f0f0f0;z-index:2"></div>
<div class="abs" style="left:118.9px;top:746.6px;width:6.3px;height:9.8px;background:#c8b840;z-index:2"></div>
<div class="nd" style="left:116.5px;top:687.4px;width:150.20px;height:56.00px"><div class="hd" style="height:24.50px;background:linear-gradient(180deg,rgba(255,255,255,0.2) 0,rgba(255,255,255,0.0) 2.5px,rgba(0,0,0,0.0) 18%,rgba(0,0,0,0.42) 50%,rgba(0,0,0,0.22) 72%,rgba(0,0,0,0) 100%),linear-gradient(90deg,rgb(130,78,78) 0px,rgb(130,78,78) 118.2px,rgb(44,46,44) 150.2px,rgb(38,40,38) 100%)"></div></div>
<div class="t" style="left:126.30px;top:690.09px;font-size:9.4px;color:#f2f2f2;font-weight:bold;text-shadow:0 1px 1px rgba(0,0,0,0.55),0 0 4px rgba(0,0,0,0.35);transform:scaleX(0.8819);z-index:4;">Play ALS_N_Sprint_F_Impulse</div>
<div class="t" style="left:126.30px;top:702.68px;font-size:7.2px;color:rgba(215,185,135,0.72);font-style:italic;transform:scaleX(1.1765);z-index:4;">Sync group Locomotion</div>
<svg class="abs" width="16" height="12" style="left:122.80px;top:717.70px"><circle cx="6" cy="6" r="3.8" fill="#99f246" stroke="rgba(0,0,0,0.35)" stroke-width="0.6" paint-order="stroke"/><path d="M10.1,4.4 L12.6,6 L10.1,7.6 Z" fill="#99f246"/></svg>
<div class="t" style="left:137.70px;top:719.54px;font-size:7.8px;color:#e6e6e6;transform:scaleX(1.0456);z-index:4;">(Play Rate / 0.333)</div>
<svg class="abs" width="6.30" height="18.89" viewBox="-1 -1 14 38" preserveAspectRatio="none" style="left:249.75px;top:718.95px"><g fill="#f2f2f2" stroke="rgba(0,0,0,0.4)" stroke-width="0.7" paint-order="stroke"><ellipse cx="6.1" cy="2.4" rx="2.3" ry="2.4"/><path d="M4.4,4.8 L7.8,4.8 L11,6 L11.8,8.2 L12,19.5 L10.8,20.9 L10.4,33.6 L11.5,35.9 L7.1,35.9 L6.9,23 L5.1,23 L4.7,35.9 L0.4,35.9 L1.5,33.6 L1.2,20.9 L0,19.5 L0.2,8.2 L1,6 Z"/></g><path d="M2.6,9.5 L2.4,19 M9.5,9.5 L9.7,19" stroke="rgba(0,0,0,0.35)" stroke-width="0.6"/></svg>
<svg class="abs" width="18" height="18" viewBox="-9 -9 18 18" style="left:257.70px;top:677.10px;z-index:5"><circle cx="0" cy="0" r="6.95" fill="none" stroke="#fff" stroke-width="1.5"/><path d="M-1.8,-3.7 L2.8,-4 L1.0,-0.7 L2.8,0.2 L-2.2,4.9 L-0.8,1.3 L-3.3,0.8 Z" fill="#fff"/></svg>
<div class="nd" style="left:289.4px;top:632.5px;width:320.50px;height:90.50px"><div class="hd" style="height:14.80px;background:linear-gradient(180deg,rgba(255,255,255,0.22) 0,rgba(255,255,255,0.0) 2.5px,rgba(0,0,0,0.0) 30%,rgba(0,0,0,0.15) 60%,rgba(0,0,0,0.05) 100%),linear-gradient(90deg,rgb(128,128,128) 0px,rgb(128,128,128) 20.4px,rgb(46,46,46) 59.4px,rgb(38,40,38) 100%)"></div></div>
<div class="t" style="left:299.00px;top:636.29px;font-size:9.4px;color:#f2f2f2;font-weight:bold;text-shadow:0 1px 1px rgba(0,0,0,0.55),0 0 4px rgba(0,0,0,0.35);transform:scaleX(0.8732);z-index:4;">Blend</div>
<svg class="abs" width="6.30" height="18.89" viewBox="-1 -1 14 38" preserveAspectRatio="none" style="left:298.55px;top:654.15px"><g fill="#f2f2f2" stroke="rgba(0,0,0,0.4)" stroke-width="0.7" paint-order="stroke"><ellipse cx="6.1" cy="2.4" rx="2.3" ry="2.4"/><path d="M4.4,4.8 L7.8,4.8 L11,6 L11.8,8.2 L12,19.5 L10.8,20.9 L10.4,33.6 L11.5,35.9 L7.1,35.9 L6.9,23 L5.1,23 L4.7,35.9 L0.4,35.9 L1.5,33.6 L1.2,20.9 L0,19.5 L0.2,8.2 L1,6 Z"/></g><path d="M2.6,9.5 L2.4,19 M9.5,9.5 L9.7,19" stroke="rgba(0,0,0,0.35)" stroke-width="0.6"/></svg>
<div class="t" style="left:311.10px;top:659.74px;font-size:7.8px;color:#e6e6e6;z-index:4;">A</div>
<svg class="abs" width="6.30" height="18.89" viewBox="-1 -1 14 38" preserveAspectRatio="none" style="left:298.55px;top:680.75px"><g fill="#f2f2f2" stroke="rgba(0,0,0,0.4)" stroke-width="0.7" paint-order="stroke"><ellipse cx="6.1" cy="2.4" rx="2.3" ry="2.4"/><path d="M4.4,4.8 L7.8,4.8 L11,6 L11.8,8.2 L12,19.5 L10.8,20.9 L10.4,33.6 L11.5,35.9 L7.1,35.9 L6.9,23 L5.1,23 L4.7,35.9 L0.4,35.9 L1.5,33.6 L1.2,20.9 L0,19.5 L0.2,8.2 L1,6 Z"/></g><path d="M2.6,9.5 L2.4,19 M9.5,9.5 L9.7,19" stroke="rgba(0,0,0,0.35)" stroke-width="0.6"/></svg>
<div class="t" style="left:311.10px;top:686.34px;font-size:7.8px;color:#e6e6e6;z-index:4;">B</div>
<svg class="abs" width="16" height="12" style="left:295.20px;top:706.60px"><circle cx="6" cy="6" r="3.8" fill="#99f246" stroke="rgba(0,0,0,0.35)" stroke-width="0.6" paint-order="stroke"/><path d="M10.1,4.4 L12.6,6 L10.1,7.6 Z" fill="#99f246"/></svg>
<div class="t" style="left:311.10px;top:708.74px;font-size:7.8px;color:#e6e6e6;transform:scaleX(1.0583);z-index:4;">FInterp(Clamp(Map Range(Alpha, in(0: 0.25), Out(0: 1)), 0, 1), (20:0.5))</div>
<svg class="abs" width="6.30" height="18.89" viewBox="-1 -1 14 38" preserveAspectRatio="none" style="left:592.55px;top:654.15px"><g fill="#f2f2f2" stroke="rgba(0,0,0,0.4)" stroke-width="0.7" paint-order="stroke"><ellipse cx="6.1" cy="2.4" rx="2.3" ry="2.4"/><path d="M4.4,4.8 L7.8,4.8 L11,6 L11.8,8.2 L12,19.5 L10.8,20.9 L10.4,33.6 L11.5,35.9 L7.1,35.9 L6.9,23 L5.1,23 L4.7,35.9 L0.4,35.9 L1.5,33.6 L1.2,20.9 L0,19.5 L0.2,8.2 L1,6 Z"/></g><path d="M2.6,9.5 L2.4,19 M9.5,9.5 L9.7,19" stroke="rgba(0,0,0,0.35)" stroke-width="0.6"/></svg>
<svg class="abs" width="18" height="18" viewBox="-9 -9 18 18" style="left:600.40px;top:622.80px;z-index:5"><circle cx="0" cy="0" r="6.95" fill="none" stroke="#fff" stroke-width="1.5"/><path d="M-1.8,-3.7 L2.8,-4 L1.0,-0.7 L2.8,0.2 L-2.2,4.9 L-0.8,1.3 L-3.3,0.8 Z" fill="#fff"/></svg>
<div class="sn" style="left:290px;top:729.6px;width:147.4px;height:70px;background:linear-gradient(180deg,rgba(230,200,130,0.6) 0,rgba(230,200,130,0) 2.5px),radial-gradient(ellipse 55% 28% at 40% 0%,rgba(190,150,70,0.9) 0%,rgba(190,150,70,0) 100%),linear-gradient(180deg,rgba(84,86,86,0.9) 0%,rgba(64,66,66,0.88) 40%,rgba(56,58,58,0.9) 100%)"></div>
<div class="t" style="left:301.20px;top:736.54px;font-size:7.8px;color:#e0e0e0;transform:scaleX(1.0438);z-index:4;">Relative Acceleration Amount X</div>
<svg class="abs" width="16" height="12" style="left:416.60px;top:734.40px"><circle cx="6" cy="6" r="3.8" fill="#99f246" stroke="rgba(0,0,0,0.35)" stroke-width="0.6" paint-order="stroke"/><path d="M10.1,4.4 L12.6,6 L10.1,7.6 Z" fill="#99f246"/></svg>
<div class="t" style="left:301.20px;top:753.34px;font-size:7.8px;color:#e0e0e0;transform:scaleX(1.0452);z-index:4;">Relative Acceleration Amount Y</div>
<svg class="abs" width="16" height="12" style="left:416.60px;top:751.20px"><circle cx="6" cy="6" r="3.1" fill="none" stroke="#99f246" stroke-width="1.5"/><path d="M10.1,4.4 L12.6,6 L10.1,7.6 Z" fill="#99f246"/></svg>
<div class="t" style="left:301.20px;top:770.54px;font-size:7.8px;color:#e0e0e0;transform:scaleX(1.0480);z-index:4;">Relative Acceleration Amount Z</div>
<svg class="abs" width="16" height="12" style="left:416.60px;top:768.40px"><circle cx="6" cy="6" r="3.1" fill="none" stroke="#99f246" stroke-width="1.5"/><path d="M10.1,4.4 L12.6,6 L10.1,7.6 Z" fill="#99f246"/></svg>
<div class="t" style="left:1535.20px;top:712.61px;font-size:68.5px;color:rgb(118,118,118);font-weight:bold;transform:scaleX(0.7662);z-index:6;-webkit-text-stroke:1.1px rgb(118,118,118);opacity:0.46;">ANIMATION</div></body></html>
